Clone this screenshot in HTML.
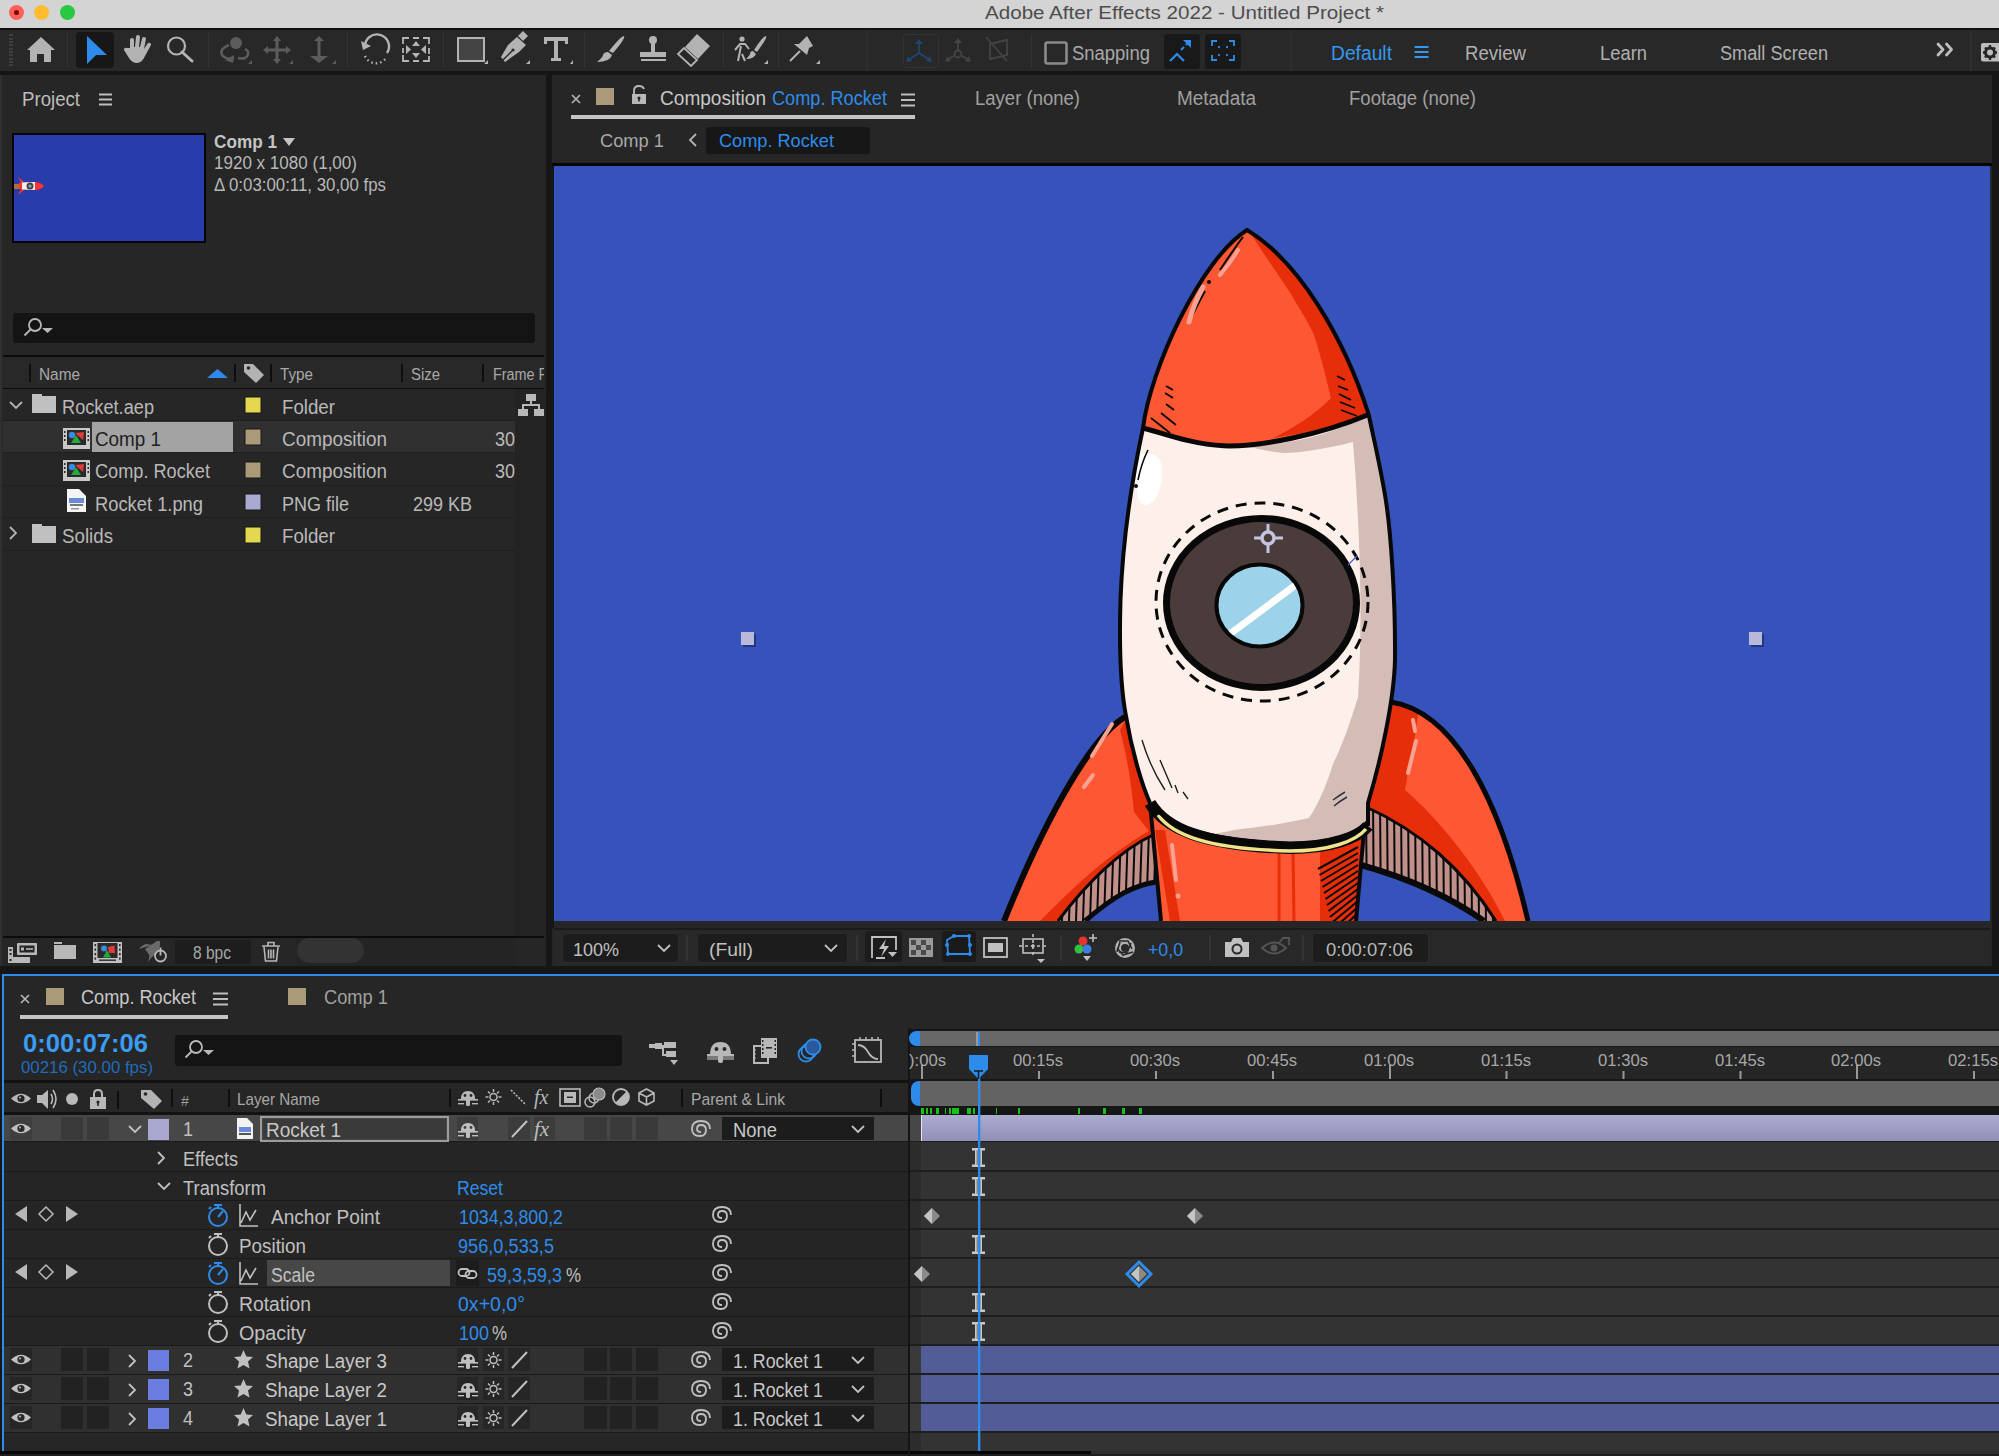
<!DOCTYPE html>
<html><head><meta charset="utf-8">
<style>
*{margin:0;padding:0;box-sizing:border-box}
html,body{width:1999px;height:1456px;overflow:hidden;background:#161616;font-family:"Liberation Sans",sans-serif;color:#b4b4b4}
.a{position:absolute}
.t{position:absolute;white-space:nowrap;line-height:1}
</style></head><body>
<!-- title bar -->
<div class="a" style="left:0;top:0;width:1999px;height:28px;background:#d4d4d4"></div>
<div class="a" style="left:9px;top:5px;width:15px;height:15px;border-radius:50%;background:#fe5f57"></div>
<div class="a" style="left:14px;top:10px;width:5px;height:5px;border-radius:50%;background:#7e0508"></div>
<div class="a" style="left:34px;top:5px;width:15px;height:15px;border-radius:50%;background:#febc2e"></div>
<div class="a" style="left:60px;top:5px;width:15px;height:15px;border-radius:50%;background:#28c840"></div>
<div class="t" style="left: 985px; top: 3px; font-size: 19px; color: rgb(77, 77, 77); transform: scaleX(1.0835); transform-origin: 0px 0px;">Adobe After Effects 2022 - Untitled Project *</div>
<div class="a" style="left:0;top:28px;width:1999px;height:2px;background:#101010"></div>
<!-- toolbar -->
<div class="a" style="left:0;top:30px;width:1999px;height:41px;background:#282828"></div>
<div class="a" style="left:0;top:71px;width:1999px;height:4px;background:#161616"></div>
<svg class="a" style="left:0;top:28px" width="1999" height="44" viewBox="0 28 1999 44">
 <g fill="#3e3e3e"><rect x="9" y="34" width="4" height="2"></rect><rect x="9" y="38" width="4" height="2"></rect><rect x="9" y="41" width="4" height="2"></rect><rect x="9" y="44" width="4" height="2"></rect><rect x="9" y="48" width="4" height="2"></rect><rect x="9" y="51" width="4" height="2"></rect><rect x="9" y="54" width="4" height="2"></rect><rect x="9" y="58" width="4" height="2"></rect><rect x="9" y="61" width="4" height="2"></rect><rect x="9" y="64" width="4" height="2"></rect></g>
 <!-- home -->
 <path fill="#b3b3b3" d="M41 37 L27 50 L30 50 L30 62 L37 62 L37 54 L44 54 L44 62 L51 62 L51 50 L55 50 Z"></path>
 <rect x="67" y="32" width="1" height="36" fill="#333"></rect>
 <rect x="76" y="32" width="38" height="36" rx="4" fill="#171717"></rect>
 <path fill="#2d8ceb" d="M87 36 L87 64 L96 55 L107 55 Z"></path>
 <!-- hand -->
 <path fill="#b3b3b3" d="M130 48 L130 40 a2 2 0 0 1 4 0 L134 47 L135 47 L136 37 a2 2 0 0 1 4 0 L139 47 L140 47 L142 39 a2 2 0 0 1 4 0 L144 49 L148 43 a2 2 0 0 1 3 2 L145 56 Q142 63 137 63 Q132 63 129 58 L124 50 a2 2 0 0 1 3 -2 Z"></path>
 <!-- zoom -->
 <circle cx="176.5" cy="46" r="8.5" fill="none" stroke="#b3b3b3" stroke-width="2.2"></circle>
 <path d="M182 52 L192 61" stroke="#b3b3b3" stroke-width="3" stroke-linecap="round"></path>
 <rect x="208" y="32" width="1" height="36" fill="#333"></rect>
 <!-- orbit -->
 <circle cx="236" cy="43" r="6" fill="#5c5c5c"></circle>
 <path d="M229 45 Q219 49 222 55 Q226 60 234 58 M238 58 Q247 60 248 54 Q249 51 245 49" fill="none" stroke="#5c5c5c" stroke-width="2.5"></path>
 <path d="M225 60 L234 55 L233 63 Z" fill="#5c5c5c"></path>
 <path d="M248 64 L252 60 L252 64 Z" fill="#5c5c5c"></path>
 <!-- move -->
 <path d="M277 36 L281 41 L278.5 41 L278.5 48.5 L286 48.5 L286 46 L291 50 L286 54 L286 51.5 L278.5 51.5 L278.5 59 L281 59 L277 64 L273 59 L275.5 59 L275.5 51.5 L268 51.5 L268 54 L263 50 L268 46 L268 48.5 L275.5 48.5 L275.5 41 L273 41 Z" fill="#5c5c5c"></path>
 <path d="M289 64 L293 60 L293 64 Z" fill="#5c5c5c"></path>
 <!-- dolly -->
 <path d="M319 36 L324 41 L320.5 41 L320.5 56 L328 56 L319 63 L310 56 L317.5 56 L317.5 41 L314 41 Z" fill="#5c5c5c"></path>
 <path d="M332 64 L336 60 L336 64 Z" fill="#5c5c5c"></path>
 <rect x="347" y="32" width="1" height="36" fill="#333"></rect>
 <!-- rotate -->
 <path d="M365 47 A12 12 0 1 1 387 53" fill="none" stroke="#b3b3b3" stroke-width="2.4"></path>
 <path d="M361 41 L363 50 L371 46 Z" fill="#b3b3b3"></path>
 <path d="M365 56 A12 12 0 0 0 386 58" fill="none" stroke="#b3b3b3" stroke-width="2.4" stroke-dasharray="1.5 3"></path>
 <!-- anchor tool -->
 <path d="M403 44 L403 38 L409 38 M413 38 L419 38 M423 38 L429 38 L429 44 M429 48 L429 54 M429 56 L429 61 L423 61 M419 61 L413 61 M409 61 L403 61 L403 55 M403 53 L403 48" fill="none" stroke="#b3b3b3" stroke-width="1.8"></path>
 <path d="M416 41 L420 46 L412 46 Z M416 58 L420 53 L412 53 Z M406 45 L411 49.5 L406 54 Z M426 45 L421 49.5 L426 54 Z" fill="#b3b3b3"></path>
 <rect x="443" y="32" width="1" height="36" fill="#333"></rect>
 <!-- rect -->
 <rect x="458" y="38" width="26" height="23" fill="#444" stroke="#b3b3b3" stroke-width="2"></rect>
 <path d="M484 64 L488 60 L488 64 Z" fill="#b3b3b3"></path>
 <!-- pen -->
 <path d="M505 62 L501 57 L508 45 L517 37 L526 45 L519 52 Z" fill="#b3b3b3"></path>
 <path d="M518 36 L523 31 L528 36 L523 41 Z" fill="#b3b3b3"></path>
 <path d="M503 60 L512 51" stroke="#282828" stroke-width="1.5"></path>
 <circle cx="513" cy="50" r="1.6" fill="#282828"></circle>
 <path d="M526 64 L530 60 L530 64 Z" fill="#b3b3b3"></path>
 <!-- T -->
 <path d="M544 37 L568 37 L568 44 L565 44 L565 41 L558 41 L558 58 L561 58 L561 61 L551 61 L551 58 L554 58 L554 41 L547 41 L547 44 L544 44 Z" fill="#b3b3b3"></path>
 <path d="M570 64 L573 60 L573 64 Z" fill="#b3b3b3"></path>
 <rect x="584" y="32" width="1" height="36" fill="#333"></rect>
 <!-- brush -->
 <path d="M624 36 Q626 38 613 53 L609 51 Q621 36 624 36 Z" fill="#b3b3b3"></path>
 <path d="M608 52 L612 55 Q610 62 597 62 Q603 57 603 55 Q604 52 608 52 Z" fill="#b3b3b3"></path>
 <!-- stamp -->
 <circle cx="653" cy="40" r="4" fill="#b3b3b3"></circle>
 <path d="M651 43 L655 43 L655 52 L666 52 L666 57 L640 57 L640 52 L651 52 Z" fill="#b3b3b3"></path>
 <rect x="641" y="59" width="25" height="2" fill="#b3b3b3"></rect>
 <!-- eraser -->
 <path d="M697 34 L710 46 L698 59 L685 47 Z" fill="#b3b3b3"></path>
 <path d="M684 48 L697 60 L691 66 L678 54 Z" fill="none" stroke="#b3b3b3" stroke-width="1.8"></path>
 <rect x="723" y="32" width="1" height="36" fill="#333"></rect>
 <!-- roto -->
 <circle cx="742" cy="39" r="2.6" fill="#b3b3b3"></circle>
 <path d="M735 50 L740 44 L745 44 L749 49 M741 46 L738 61 M742 54 L745 61" fill="none" stroke="#b3b3b3" stroke-width="2"></path>
 <path d="M766 36 Q768 37 757 52 L754 50 Q763 36 766 36 Z" fill="#b3b3b3"></path>
 <path d="M753 51 L756 54 Q754 59 746 59 Q750 55 750 54 Q750 51 753 51 Z" fill="#b3b3b3"></path>
 <path d="M764 64 L768 60 L768 64 Z" fill="#b3b3b3"></path>
 <rect x="778" y="32" width="1" height="36" fill="#333"></rect>
 <!-- pin -->
 <path d="M799 44 L807 36 L813 46 L809 48 L807 55 L794 44 Z" fill="#b3b3b3"></path>
 <path d="M800 51 L790 61" stroke="#b3b3b3" stroke-width="2"></path>
 <path d="M816 64 L820 60 L820 64 Z" fill="#b3b3b3"></path>
 <rect x="866" y="31" width="2" height="40" fill="#2e2e2e"></rect>
 <!-- 3d axes -->
 <rect x="903.5" y="34.5" width="35" height="33" rx="3" fill="none" stroke="#333"></rect>
 <path d="M919 41 L919 53 L908 60 M919 53 L930 60" fill="none" stroke="#1e4670" stroke-width="1.8"></path>
 <path d="M919 39 L915 44 L923 44 Z M906 62 L908 56 L912 61 Z M932 62 L930 56 L926 61 Z" fill="#1e4670"></path>
 <path d="M958 41 L958 50 M954 56 L947 60 M962 56 L969 60" fill="none" stroke="#444" stroke-width="1.8"></path>
 <circle cx="958" cy="54" r="3.5" fill="none" stroke="#444" stroke-width="1.8"></circle>
 <path d="M958 38 L954 43 L962 43 Z M945 62 L947 56 L951 61 Z M971 62 L969 56 L965 61 Z" fill="#444"></path>
 <path d="M990 44 L1007 40 L1007 55 L990 59 Z M986 37 L1007 61" fill="none" stroke="#444" stroke-width="1.8"></path>
 <rect x="1031" y="34" width="1" height="34" fill="#333"></rect>
 <rect x="1045.5" y="42.5" width="21" height="21" rx="2" fill="none" stroke="#8a8a8a" stroke-width="2.6"></rect>
 <rect x="1164" y="34" width="36" height="35" rx="3" fill="#191919"></rect>
 <path d="M1170 61 L1177 54 L1184 61" fill="none" stroke="#2d8ceb" stroke-width="2.2"></path>
 <path d="M1181 50 L1184 47 M1186 45 L1188 43" stroke="#2d8ceb" stroke-width="2"></path>
 <path d="M1191 40 L1191 48 L1183 40 Z" fill="#2d8ceb"></path>
 <rect x="1205" y="34" width="36" height="35" rx="3" fill="#191919"></rect>
 <path d="M1212 46 L1212 41 L1217 41 M1229 41 L1234 41 L1234 46 M1234 55 L1234 60 L1229 60 M1217 60 L1212 60 L1212 55" fill="none" stroke="#2d8ceb" stroke-width="1.8"></path>
 <path d="M1219 46 L1219 48 M1227 46 L1227 48 M1219 54 L1219 56 M1227 54 L1227 56" stroke="#2d8ceb" stroke-width="1.8"></path>
 <rect x="1290" y="31" width="2" height="40" fill="#2e2e2e"></rect>
 <path d="M1414.5 47 L1428.5 47 M1414.5 52 L1428.5 52 M1414.5 57 L1428.5 57" stroke="#3398ee" stroke-width="2"></path>
 <path d="M1938 44 L1943 49.5 L1938 55 M1946.5 44 L1951.5 49.5 L1946.5 55" fill="none" stroke="#bdbdbd" stroke-width="2.8" stroke-linecap="round" stroke-linejoin="round"></path>
 <rect x="1970" y="31" width="2" height="40" fill="#303030"></rect>
 <rect x="1981" y="43" width="20" height="18.5" rx="2" fill="#bdbdbd"></rect>
 <circle cx="1990" cy="52.5" r="4.5" fill="none" stroke="#262626" stroke-width="3"></circle>
 <path d="M1990 45 L1990 47.5 M1990 57.5 L1990 60 M1983 52.5 L1985.5 52.5 M1994.5 52.5 L1997 52.5 M1985 47.5 L1986.8 49.3 M1993.2 55.7 L1995 57.5 M1995 47.5 L1993.2 49.3 M1986.8 55.7 L1985 57.5" stroke="#262626" stroke-width="2.4"></path>
</svg>
<div class="t" style="left: 1072px; top: 43px; font-size: 20px; color: rgb(168, 168, 168); transform: scaleX(0.9227); transform-origin: 0px 0px;">Snapping</div>
<div class="t" style="left: 1331px; top: 43px; font-size: 20px; color: rgb(51, 152, 238); transform: scaleX(0.9625); transform-origin: 0px 0px;">Default</div>
<div class="t" style="left: 1465px; top: 43px; font-size: 20px; color: rgb(176, 176, 176); transform: scaleX(0.9302); transform-origin: 0px 0px;">Review</div>
<div class="t" style="left: 1600px; top: 43px; font-size: 20px; color: rgb(176, 176, 176); transform: scaleX(0.9188); transform-origin: 0px 0px;">Learn</div>
<div class="t" style="left: 1720px; top: 43px; font-size: 20px; color: rgb(176, 176, 176); transform: scaleX(0.908); transform-origin: 0px 0px;">Small Screen</div>

<!-- project panel -->
<div class="a" style="left:0;top:75px;width:2px;height:891px;background:#303030"></div>
<div class="a" style="left:2px;top:75px;width:544px;height:891px;background:#262626"></div>
<div class="t" style="left: 22px; top: 89px; font-size: 20px; color: rgb(189, 189, 189); transform: scaleX(0.9317); transform-origin: 0px 0px;">Project</div>
<svg class="a" style="left:98px;top:92px" width="16" height="15"><path d="M1 2.5H14M1 7.5H14M1 12.5H14" stroke="#bdbdbd" stroke-width="2"></path></svg>
<div class="a" style="left:12px;top:133px;width:194px;height:110px;background:#283cab;border:2px solid #050505"></div>
<svg class="a" style="left:14px;top:176px" width="32" height="22">
 <path d="M0 8 L6 8 L6 13 L0 13 Z" fill="#b07030"></path>
 <path d="M4 1 L10 6 L8 9 Z M4 19 L10 14 L8 11 Z" fill="#f03a20"></path>
 <path d="M5 7 L22 6 Q28 7 30 10 Q28 13 22 14 L5 13 Z" fill="#f33"></path>
 <path d="M8 6.5 L21 6 L21 14 L8 13.5 Z" fill="#fbeee8"></path>
 <circle cx="16" cy="10" r="3.5" fill="#444"></circle><circle cx="16" cy="10" r="1.6" fill="#7ab"></circle>
</svg>
<div class="t" style="left: 214px; top: 132px; font-size: 19px; color: rgb(196, 196, 196); font-weight: bold; transform: scaleX(0.904); transform-origin: 0px 0px;">Comp 1</div>
<svg class="a" style="left:283px;top:137px" width="13" height="10"><path d="M0 1 L12 1 L6 9 Z" fill="#c4c4c4"></path></svg>
<div class="t" style="left: 214px; top: 154px; font-size: 18px; color: rgb(184, 184, 184); transform: scaleX(0.9462); transform-origin: 0px 0px;">1920 x 1080 (1,00)</div>
<div class="t" style="left: 214px; top: 176px; font-size: 18px; color: rgb(184, 184, 184); transform: scaleX(0.9356); transform-origin: 0px 0px;">Δ 0:03:00:11, 30,00 fps</div>
<!-- search -->
<div class="a" style="left:13px;top:313px;width:522px;height:30px;background:#141414;border-radius:3px"></div>
<svg class="a" style="left:22px;top:316px" width="34" height="24"><circle cx="13" cy="9" r="6" fill="none" stroke="#b8b8b8" stroke-width="1.8"></circle><path d="M9 13 L2.5 19.5" stroke="#b8b8b8" stroke-width="1.8"></path><path d="M20 12 L31 12 L25.5 17 Z" fill="#b8b8b8"></path></svg>
<!-- header -->
<div class="a" style="left:3px;top:355px;width:541px;height:2px;background:#0b0b0b"></div>
<div class="a" style="left:3px;top:357px;width:541px;height:31px;background:#282828"></div>
<div class="a" style="left:3px;top:388px;width:541px;height:1px;background:#0b0b0b"></div>
<svg class="a" style="left:0;top:357px" width="546" height="32">
 <g fill="#0e0e0e"><rect x="29" y="7" width="2" height="18"></rect><rect x="234" y="7" width="2" height="18"></rect><rect x="270" y="7" width="2" height="18"></rect><rect x="401" y="7" width="2" height="18"></rect><rect x="482" y="7" width="2" height="18"></rect></g>
 <path d="M207 21 L228 21 L217.5 12 Z" fill="#2d8ceb"></path>
 <path d="M244 7 L253 7 L264 18 L256 26 L244 15 Z" fill="#b3b3b3"></path><circle cx="248.5" cy="11" r="1.8" fill="#282828"></circle>
</svg>
<div class="t" style="left: 39px; top: 367px; font-size: 16px; color: rgb(168, 168, 168); transform: scaleX(0.9605); transform-origin: 0px 0px;">Name</div>
<div class="t" style="left: 280px; top: 367px; font-size: 16px; color: rgb(168, 168, 168); transform: scaleX(0.9514); transform-origin: 0px 0px;">Type</div>
<div class="t" style="left: 411px; top: 367px; font-size: 16px; color: rgb(168, 168, 168); transform: scaleX(0.9317); transform-origin: 0px 0px;">Size</div>
<div class="a" style="left:493px;top:357px;width:52px;height:31px;overflow:hidden"><div class="t" style="left: 0px; top: 10px; font-size: 16px; color: rgb(168, 168, 168); transform: scaleX(0.8998); transform-origin: 0px 0px;">Frame R</div></div>
<div class="a" style="left:544px;top:357px;width:2px;height:31px;background:#262626"></div>
<!-- rows -->
<div class="a" style="left:3px;top:389px;width:512px;height:548px;background:#262626"></div>
<div class="a" style="left:515px;top:389px;width:30px;height:548px;background:#232323"></div>
<div class="a" style="left:3px;top:421px;width:512px;height:32px;background:#303030"></div>
<div class="a" style="left:3px;top:420px;width:512px;height:1px;background:#1f1f1f"></div>
<div class="a" style="left:3px;top:452px;width:512px;height:1px;background:#1f1f1f"></div>
<div class="a" style="left:3px;top:485px;width:512px;height:1px;background:#1f1f1f"></div>
<div class="a" style="left:3px;top:517px;width:512px;height:1px;background:#1f1f1f"></div>
<div class="a" style="left:3px;top:550px;width:512px;height:1px;background:#1f1f1f"></div>
<div class="a" style="left:92px;top:422px;width:141px;height:30px;background:#a3a3a3"></div>
<svg class="a" style="left:0;top:389px" width="546" height="165">
 <path d="M10 13 L16 19 L22 13" fill="none" stroke="#b3b3b3" stroke-width="1.8"></path>
 <path d="M10 138 L16 144 L10 150" fill="none" stroke="#b3b3b3" stroke-width="1.8"></path>
 <path d="M32 5 L42 5 L42 7 L56 7 L56 24 L32 24 Z" fill="#c0c0c0"></path>
 <path d="M32 135 L42 135 L42 137 L56 137 L56 154 L32 154 Z" fill="#c0c0c0"></path>
 <g id="compic">
 <rect x="63" y="39" width="27" height="21" fill="#c8c8c8"></rect>
 <rect x="67" y="41" width="19" height="15" fill="#2a2a2a"></rect>
 <circle cx="72" cy="46" r="3.2" fill="#3a8ae0"></circle><path d="M75 44 L84 43 L83 51 Z" fill="#e23b3b"></path><path d="M76 46 L81 54 L71 54 Z" fill="#22aa3a"></path>
 <g fill="#2a2a2a"><rect x="64" y="42" width="1.5" height="2"></rect><rect x="64" y="46" width="1.5" height="2"></rect><rect x="64" y="50" width="1.5" height="2"></rect><rect x="87.5" y="42" width="1.5" height="2"></rect><rect x="87.5" y="46" width="1.5" height="2"></rect><rect x="87.5" y="50" width="1.5" height="2"></rect></g>
 </g>
 <use href="#compic" y="32"></use>
 <path d="M67 100 L79 100 L86 107 L86 123 L67 123 Z" fill="#f4f4f4"></path>
 <rect x="69" y="109" width="15" height="5" fill="#6a8ad8"></rect><rect x="70" y="115" width="13" height="2" fill="#777"></rect><rect x="71" y="119" width="8" height="1.5" fill="#999"></rect>
 <g><rect x="245" y="8" width="16" height="16" fill="#e4d84e" stroke="#181818" stroke-width="1"></rect>
 <rect x="245" y="40" width="16" height="16" fill="#ab9a7a" stroke="#181818" stroke-width="1"></rect>
 <rect x="245" y="73" width="16" height="16" fill="#ab9a7a" stroke="#181818" stroke-width="1"></rect>
 <rect x="245" y="105" width="16" height="16" fill="#a9a9d2" stroke="#181818" stroke-width="1"></rect>
 <rect x="245" y="138" width="16" height="16" fill="#e4d84e" stroke="#181818" stroke-width="1"></rect></g>
 <g fill="#b8b8b8"><rect x="526" y="5" width="10" height="7"></rect><rect x="530" y="12" width="2" height="4"></rect><rect x="522" y="15" width="18" height="2"></rect><rect x="522" y="15" width="2" height="5"></rect><rect x="538" y="15" width="2" height="5"></rect><rect x="518" y="20" width="10" height="7"></rect><rect x="534" y="20" width="10" height="7"></rect></g>
</svg>
<div class="t" style="left: 62px; top: 397px; font-size: 20px; color: rgb(185, 185, 185); transform: scaleX(0.9093); transform-origin: 0px 0px;">Rocket.aep</div>
<div class="t" style="left: 95px; top: 429px; font-size: 20px; color: rgb(30, 30, 30); transform: scaleX(0.9424); transform-origin: 0px 0px;">Comp 1</div>
<div class="t" style="left: 95px; top: 461px; font-size: 20px; color: rgb(185, 185, 185); transform: scaleX(0.9075); transform-origin: 0px 0px;">Comp. Rocket</div>
<div class="t" style="left: 95px; top: 494px; font-size: 20px; color: rgb(185, 185, 185); transform: scaleX(0.9163); transform-origin: 0px 0px;">Rocket 1.png</div>
<div class="t" style="left: 62px; top: 526px; font-size: 20px; color: rgb(185, 185, 185); transform: scaleX(0.936); transform-origin: 0px 0px;">Solids</div>
<div class="t" style="left: 282px; top: 397px; font-size: 20px; color: rgb(185, 185, 185); transform: scaleX(0.9347); transform-origin: 0px 0px;">Folder</div>
<div class="t" style="left: 282px; top: 429px; font-size: 20px; color: rgb(185, 185, 185); transform: scaleX(0.9445); transform-origin: 0px 0px;">Composition</div>
<div class="t" style="left: 282px; top: 461px; font-size: 20px; color: rgb(185, 185, 185); transform: scaleX(0.9445); transform-origin: 0px 0px;">Composition</div>
<div class="t" style="left: 282px; top: 494px; font-size: 20px; color: rgb(185, 185, 185); transform: scaleX(0.8997); transform-origin: 0px 0px;">PNG file</div>
<div class="t" style="left: 282px; top: 526px; font-size: 20px; color: rgb(185, 185, 185); transform: scaleX(0.9347); transform-origin: 0px 0px;">Folder</div>
<div class="t" style="left: 495px; top: 429px; font-size: 20px; color: rgb(185, 185, 185); transform: scaleX(0.8989); transform-origin: 0px 0px;">30</div>
<div class="t" style="left: 495px; top: 461px; font-size: 20px; color: rgb(185, 185, 185); transform: scaleX(0.8989); transform-origin: 0px 0px;">30</div>
<div class="t" style="left: 413px; top: 494px; font-size: 20px; color: rgb(185, 185, 185); transform: scaleX(0.8993); transform-origin: 0px 0px;">299 KB</div>
<!-- footer -->
<div class="a" style="left:3px;top:936px;width:541px;height:2px;background:#0b0b0b"></div>
<div class="a" style="left:3px;top:938px;width:543px;height:28px;background:#262626"></div>
<div class="a" style="left:296px;top:938px;width:219px;height:28px;background:#242424"></div>
<svg class="a" style="left:0;top:936px" width="546" height="30">
 <g fill="#b8b8b8"><rect x="8" y="11" width="5" height="16"></rect><rect x="8" y="21" width="22" height="6"></rect><rect x="17" y="7" width="20" height="12" rx="1"></rect></g>
 <g fill="#262626"><rect x="9.5" y="13" width="2" height="2"></rect><rect x="9.5" y="17" width="2" height="2"></rect><rect x="9.5" y="23" width="2" height="2"></rect><rect x="19.5" y="9.5" width="15" height="7"></rect></g>
 <rect x="21" y="11.5" width="3" height="3" fill="#b8b8b8"></rect><rect x="26" y="12.2" width="7" height="1.6" fill="#b8b8b8"></rect>
 <rect x="54" y="6" width="8" height="2" fill="#b8b8b8"></rect><rect x="54" y="9" width="22" height="14" fill="#b8b8b8"></rect>
 <rect x="93" y="6" width="29" height="21" fill="#c0c0c0"></rect><rect x="97.5" y="7" width="20" height="15" fill="#2a2a2a"></rect>
 <g fill="#2a2a2a"><rect x="94.5" y="8" width="1.6" height="2.2"></rect><rect x="94.5" y="12.5" width="1.6" height="2.2"></rect><rect x="94.5" y="17" width="1.6" height="2.2"></rect><rect x="94.5" y="21.5" width="1.6" height="2.2"></rect><rect x="119" y="8" width="1.6" height="2.2"></rect><rect x="119" y="12.5" width="1.6" height="2.2"></rect><rect x="119" y="17" width="1.6" height="2.2"></rect><rect x="119" y="21.5" width="1.6" height="2.2"></rect><rect x="99" y="23.5" width="17" height="1.4"></rect></g>
 <circle cx="104" cy="12.5" r="3" fill="#3a8ae0"></circle><path d="M108 11 L114.5 9.5 L115 17 L109 17 Z" fill="#e23b3b"></path><path d="M107 14 L111 21.5 L103 21.5 Z" fill="#22aa3a"></path>
 <path d="M139 13 Q143 8 147 8 L152 9 Z" fill="#6a6a6a"></path>
 <path d="M148 26 Q150 20 149 17 L159 6 Q161 8 159 14 L151 22 Z" fill="#6a6a6a"></path>
 <path d="M145 13 L157 5 Q161 4 160 8 L150 20 Z" fill="#6a6a6a"></path>
 <circle cx="160.5" cy="20" r="5.5" fill="none" stroke="#b8b8b8" stroke-width="1.8"></circle><rect x="159.6" y="11.5" width="1.8" height="8" fill="#b8b8b8"></rect>
 <rect x="175" y="4" width="76" height="24" rx="3" fill="#1d1d1d"></rect>
 <path d="M262 10 L280 10 M268 10 L268 6.5 L274 6.5 L274 10 M264 11 L265.5 25 L276.5 25 L278 11 M268.5 13.5 L268.5 22.5 M271 13.5 L271 22.5 M273.5 13.5 L273.5 22.5" fill="none" stroke="#b8b8b8" stroke-width="1.6"></path>
 <rect x="297" y="2" width="67" height="25" rx="12.5" fill="#333"></rect>
</svg>
<div class="t" style="left: 193px; top: 943px; font-size: 19px; color: rgb(168, 168, 168); transform: scaleX(0.8175); transform-origin: 0px 0px;">8 bpc</div>

<!-- comp panel -->
<div class="a" style="left:552px;top:75px;width:1440px;height:891px;background:#262626"></div>
<svg class="a" style="left:552px;top:75px" width="1440" height="90">
 <path d="M20 20 L28 28 M28 20 L20 28" stroke="#b8b8b8" stroke-width="1.6"></path>
 <rect x="44" y="13" width="18" height="17" fill="#ab9a7a"></rect>
 <path d="M82 21 L82 16 Q82 11 87 11 Q91 11 92 14" fill="none" stroke="#b8b8b8" stroke-width="1.8"></path>
 <rect x="80" y="19" width="14" height="10" fill="#b8b8b8"></rect><circle cx="87" cy="23" r="1.6" fill="#262626"></circle><rect x="86.2" y="23" width="1.6" height="3.5" fill="#262626"></rect>
 <path d="M349 19.5H363M349 25H363M349 30.5H363" stroke="#bdbdbd" stroke-width="2"></path>
 <rect x="19" y="40" width="344" height="4" fill="#c4c4c4"></rect>
 <path d="M144 59 L138 65 L144 71" fill="none" stroke="#b3b3b3" stroke-width="1.8"></path>
 <rect x="154" y="52" width="164" height="27" rx="3" fill="#171717"></rect>
</svg>
<div class="a" style="left:552px;top:163px;width:1440px;height:3px;background:#050505"></div>
<div class="a" style="left:552px;top:166px;width:2px;height:762px;background:#161616"></div>
<div class="t" style="left: 660px; top: 88px; font-size: 20px; color: rgb(200, 200, 200); transform: scaleX(0.9535); transform-origin: 0px 0px;">Composition</div>
<div class="t" style="left: 772px; top: 88px; font-size: 20px; color: rgb(45, 140, 235); transform: scaleX(0.9075); transform-origin: 0px 0px;">Comp. Rocket</div>
<div class="t" style="left: 975px; top: 88px; font-size: 20px; color: rgb(160, 160, 160); transform: scaleX(0.9259); transform-origin: 0px 0px;">Layer (none)</div>
<div class="t" style="left: 1177px; top: 88px; font-size: 20px; color: rgb(160, 160, 160); transform: scaleX(0.9473); transform-origin: 0px 0px;">Metadata</div>
<div class="t" style="left: 1349px; top: 88px; font-size: 20px; color: rgb(160, 160, 160); transform: scaleX(0.9286); transform-origin: 0px 0px;">Footage (none)</div>
<div class="t" style="left: 600px; top: 131px; font-size: 19px; color: rgb(168, 168, 168); transform: scaleX(0.962); transform-origin: 0px 0px;">Comp 1</div>
<div class="t" style="left: 719px; top: 131px; font-size: 19px; color: rgb(45, 140, 235); transform: scaleX(0.9553); transform-origin: 0px 0px;">Comp. Rocket</div>
<!-- viewer -->
<div class="a" id="viewer" style="left:554px;top:166px;width:1436px;height:755px;background:#3553bb;overflow:hidden"></div>
<!--ROCKET-->
<svg class="a" style="left:554px;top:166px" width="1436" height="755" viewBox="554 166 1436 755">
<defs>
<clipPath id="bodyclip"><path d="M1143 428 C1134 470 1123 530 1120.5 600 C1119 650 1121 690 1126 716 C1132 752 1142 785 1150 803 C1165 828 1200 845 1290 848 C1330 848 1358 838 1368 826 L1368 803 C1381 760 1394 700 1395 660 C1395.5 600 1391 530 1385 495 C1380 465 1374 440 1368.7 414.5 C1320 435 1260 447 1223.6 445.8 C1190 444 1160 432 1143 428 Z"></path></clipPath>
<clipPath id="noseclip"><path d="M1143 428 C1150 370 1200 260 1247 230 C1300 262 1345 340 1368.7 414.5 C1320 435 1260 447 1223.6 445.8 C1190 444 1160 432 1143 428 Z"></path></clipPath>
<clipPath id="lfinclip"><path d="M1127 716 C1094 733 1048 812 1004 921 L1060 921 C1085 885 1120 850 1153 835 L1150 803 Z"></path></clipPath>
<clipPath id="rfinclip"><path d="M1391 702 C1455 712 1500 800 1528 921 L1496 921 C1470 875 1420 830 1364 806 L1368 803 Z"></path></clipPath>
<clipPath id="lbandclip"><path d="M1058 921 C1085 885 1120 850 1153 835 L1156 882 C1135 885 1115 895 1085 921 Z"></path></clipPath>
<clipPath id="rbandclip"><path d="M1364 806 C1420 831 1462 868 1496 921 L1484 921 C1453 899 1411 879 1361 865 Z"></path></clipPath>
<clipPath id="nozclip"><path d="M1150 803 L1161 921 L1356 921 L1364 831 L1368 826 C1358 838 1330 848 1290 848 C1200 845 1165 828 1150 803 Z"></path></clipPath>
</defs>
<path d="M1127 716 C1094 733 1048 812 1004 921 L1060 921 C1085 885 1120 850 1153 835 L1150 803 Z" fill="#fe5733"></path>
<g clip-path="url(#lfinclip)"><path d="M1040 921 C1080 880 1120 845 1160 825 L1165 840 C1130 855 1095 885 1072 921 Z" fill="#e62e0a"></path><path d="M1128 716 L1150 803 L1156 840 L1134 812 C1132 790 1128 760 1120 730 Z" fill="#e62e0a"></path></g>
<path d="M1127 716 C1094 733 1048 812 1004 921" fill="none" stroke="#080808" stroke-width="6"></path>
<path d="M1118 712 L1098 744" stroke="#f7a393" stroke-width="4" stroke-linecap="round" transform="translate(-6,12)"></path>
<path d="M1093 775 L1084 787" stroke="#f7a393" stroke-width="4" stroke-linecap="round"></path>
<path d="M1058 921 C1085 885 1120 850 1153 835 L1156 882 C1135 885 1115 895 1085 921 Z" fill="#c2908a"></path>
<g clip-path="url(#lbandclip)"><path d="M1062 921 L1065 830 M1069 921 L1072 830 M1076 921 L1079 830 M1083 921 L1086 830 M1090 921 L1093 830 M1097 921 L1100 830 M1104 921 L1107 830 M1111 921 L1114 830 M1118 921 L1121 830 M1125 921 L1128 830 M1132 921 L1135 830 M1139 921 L1142 830 M1146 921 L1149 830 M1153 921 L1156 830" stroke="#0a0a0a" stroke-width="2"></path></g>
<path d="M1058 921 C1085 885 1120 850 1153 835" fill="none" stroke="#0a0a0a" stroke-width="3"></path>
<path d="M1156 882 C1135 885 1115 895 1085 921" fill="none" stroke="#0a0a0a" stroke-width="5"></path>
<path d="M1391 702 C1455 712 1500 800 1528 921 L1496 921 C1470 875 1420 830 1364 806 L1368 803 Z" fill="#fe5733"></path>
<g clip-path="url(#rfinclip)"><path d="M1380 690 L1420 700 C1415 740 1410 760 1405 790 C1440 820 1480 870 1505 921 L1480 921 C1450 875 1410 840 1360 815 Z" fill="#e62e0a"></path></g>
<path d="M1391 702 C1455 712 1500 800 1528 921" fill="none" stroke="#080808" stroke-width="5"></path>
<path d="M1413 720 L1415 731 M1416 741 L1408 773" stroke="#f7a393" stroke-width="4" stroke-linecap="round"></path>
<path d="M1364 806 C1420 831 1462 868 1496 921 L1484 921 C1453 899 1411 879 1361 865 Z" fill="#c2908a"></path>
<g clip-path="url(#rbandclip)"><path d="M1366 800 L1367 925 M1373 800 L1374 925 M1380 800 L1381 925 M1387 800 L1388 925 M1394 800 L1395 925 M1401 800 L1402 925 M1408 800 L1409 925 M1415 800 L1416 925 M1422 800 L1423 925 M1429 800 L1430 925 M1436 800 L1437 925 M1443 800 L1444 925 M1450 800 L1451 925 M1457 800 L1458 925 M1464 800 L1465 925 M1471 800 L1472 925 M1478 800 L1479 925 M1485 800 L1486 925 M1492 800 L1493 925 M1499 800 L1500 925" stroke="#0a0a0a" stroke-width="2"></path></g>
<path d="M1364 806 C1420 831 1462 868 1496 921" fill="none" stroke="#0a0a0a" stroke-width="3"></path>
<path d="M1361 865 C1411 879 1453 899 1484 921" fill="none" stroke="#0a0a0a" stroke-width="6"></path>
<path d="M1161 906 L1185 921 L1161 921 Z" fill="#c2908a"></path><path d="M1161 906 L1185 921" stroke="#0a0a0a" stroke-width="3"></path>
<path d="M1150 803 L1161 921 L1356 921 L1364 831 L1368 826 C1358 838 1330 848 1290 848 C1200 845 1165 828 1150 803 Z" fill="#fe5733"></path>
<g clip-path="url(#nozclip)"><rect x="1320" y="820" width="50" height="110" fill="#e62e0a"></rect><path d="M1165 830 L1180 921 L1170 921 L1155 830 Z" fill="#e62e0a"></path><path d="M1279 850 L1279 921 M1293 850 L1294 921" stroke="#e62e0a" stroke-width="3"></path>
<path d="M1318.0 869 L1358 847 M1319.5 875 L1358 853 M1321.0 881 L1358 859 M1322.5 887 L1358 865 M1324.0 893 L1358 871 M1325.5 899 L1358 877 M1327.0 905 L1358 883 M1328.5 911 L1358 889 M1330.0 917 L1358 895 M1331.5 923 L1358 901 M1333.0 929 L1358 907 M1334.5 935 L1358 913" stroke="#0a0a0a" stroke-width="2"></path>
<path d="M1172 845 L1176 880" stroke="#f7a393" stroke-width="4" stroke-linecap="round"></path><circle cx="1178" cy="896" r="2.5" fill="#f7a393"></circle></g>
<path d="M1150 803 L1161 921 M1364 831 L1356 921" fill="none" stroke="#0a0a0a" stroke-width="4"></path>
<path d="M1143 428 C1134 470 1123 530 1120.5 600 C1119 650 1121 690 1126 716 C1132 752 1142 785 1150 803 C1165 828 1200 845 1290 848 C1330 848 1358 838 1368 826 L1368 803 C1381 760 1394 700 1395 660 C1395.5 600 1391 530 1385 495 C1380 465 1374 440 1368.7 414.5 C1320 435 1260 447 1223.6 445.8 C1190 444 1160 432 1143 428 Z" fill="#fdefea"></path>
<g clip-path="url(#bodyclip)"><path d="M1245 446 C1300 444 1340 432 1370 412 L1400 400 L1400 880 L1200 880 L1200 838 C1215 834 1230 830 1250 828 C1270 826 1290 822 1309 818 C1315 810 1325 790 1333 764 C1340 750 1348 730 1358 697 C1363 620 1360 530 1353 442 C1330 448 1300 453 1283 453 C1270 452 1255 448 1245 446 Z" fill="#d4bdb6"></path><path d="M1138 455 C1150 450 1162 455 1162 470 C1162 490 1155 505 1145 505 C1136 505 1134 480 1138 455 Z" fill="#ffffff"></path><path d="M1148 450 C1143 460 1140 470 1138 480" stroke="#0a0a0a" stroke-width="1.6" fill="none"></path><circle cx="1136" cy="486" r="2" fill="#0a0a0a"></circle><path d="M1142 740 C1148 760 1155 775 1165 790 M1160 760 L1172 788 M1175 785 L1178 793 M1183 792 L1188 799" stroke="#202020" stroke-width="1.4" fill="none"></path><path d="M1345 792 Q1340 795 1333 800 M1347 797 Q1340 801 1334 806" stroke="#303040" stroke-width="1.5" fill="none"></path></g>
<path d="M1143 428 C1134 470 1123 530 1120.5 600 C1119 650 1121 690 1126 716 C1132 752 1142 785 1150 803" fill="none" stroke="#080808" stroke-width="4"></path>
<path d="M1368.7 414.5 C1374 440 1380 465 1385 495 C1391 530 1395.5 600 1395 660 C1394 700 1381 760 1368 803 L1368 826" fill="none" stroke="#080808" stroke-width="4"></path>
<path d="M1150 803 C1165 828 1200 845 1290 848 C1330 848 1358 838 1368 826" fill="none" stroke="#080808" stroke-width="12"></path>
<path d="M1158 815 C1172 834 1205 849 1290 851 C1330 851 1356 841 1366 829" fill="none" stroke="#efe48e" stroke-width="3.5"></path>
<path d="M1150 803 C1165 824 1200 840 1290 843 C1330 843 1358 833 1368 821" fill="none" stroke="#080808" stroke-width="3"></path>
<path d="M1143 428 C1150 370 1200 260 1247 230 C1300 262 1345 340 1368.7 414.5 C1320 435 1260 447 1223.6 445.8 C1190 444 1160 432 1143 428 Z" fill="#fe5733"></path>
<g clip-path="url(#noseclip)"><path d="M1247 228 L1262 251 C1275 270 1285 285 1291 294 C1300 310 1310 325 1314 335 C1322 360 1328 385 1331 398 C1315 415 1290 430 1273 438 L1380 420 L1380 228 Z" fill="#e62e0a"></path><path d="M1243 237 C1236 246 1228 258 1220 270" stroke="#0a0a0a" stroke-width="2" fill="none"></path><path d="M1238 250 C1232 260 1226 268 1220 275" stroke="#f7a393" stroke-width="4" fill="none" stroke-linecap="round"></path><circle cx="1209" cy="282" r="2" fill="#0a0a0a"></circle><path d="M1205 291 C1200 300 1196 308 1192 316" stroke="#0a0a0a" stroke-width="2" fill="none"></path><path d="M1203 287 C1197 298 1192 310 1189 322" stroke="#f7a393" stroke-width="5" fill="none" stroke-linecap="round"></path><path d="M1166 386 L1173 390 M1165 393 L1173 398 M1166 404 L1174 410 M1161 413 L1176 425 M1151 418 L1170 433" stroke="#0a0a0a" stroke-width="1.8"></path><path d="M1337 376 L1345 380 M1338 386 L1348 390 M1339 394 L1351 400 M1340 402 L1355 408 M1341 410 L1357 416" stroke="#0a0a0a" stroke-width="1.8"></path></g>
<path d="M1143 428 C1150 370 1200 260 1247 230 C1300 262 1345 340 1368.7 414.5" fill="none" stroke="#080808" stroke-width="4"></path>
<path d="M1368.7 414.5 C1320 435 1260 447 1223.6 445.8 C1190 444 1160 432 1143 428" fill="none" stroke="#080808" stroke-width="5"></path>
<ellipse cx="1262" cy="602" rx="106" ry="99" fill="none" stroke="#0a0a0a" stroke-width="3" stroke-dasharray="11 8"></ellipse>
<ellipse cx="1261.5" cy="603" rx="95" ry="84.5" fill="#4a3c3a" stroke="#080808" stroke-width="7"></ellipse>
<ellipse cx="1259.5" cy="605.5" rx="43" ry="41" fill="#9cd2ea" stroke="#080808" stroke-width="4"></ellipse>
<clipPath id="winclip"><ellipse cx="1259.5" cy="605.5" rx="41" ry="39"></ellipse></clipPath><path clip-path="url(#winclip)" d="M1215 645 L1305 578" stroke="#ffffff" stroke-width="7"></path>
<g stroke="#c4c4de" fill="none"><circle cx="1268" cy="538" r="6" stroke-width="3.5"></circle><path d="M1268 524 L1268 532 M1268 544 L1268 553 M1254 538 L1262 538 M1274 538 L1283 538" stroke-width="3"></path></g>
<path d="M1348 565 L1357 556" stroke="#4a5ad0" stroke-width="1.2"></path>
<rect x="743" y="634" width="13" height="13" fill="#203070" opacity="0.8"></rect><rect x="741" y="632" width="13" height="13" fill="#b8b8d8"></rect>
<rect x="1751" y="634" width="13" height="13" fill="#203070" opacity="0.8"></rect><rect x="1749" y="632" width="13" height="13" fill="#b8b8d8"></rect>
</svg>
<!--/ROCKET-->
<!-- comp footer -->
<div class="a" style="left:554px;top:928px;width:1436px;height:2px;background:#1b1b1b"></div>
<div class="a" style="left:554px;top:930px;width:1436px;height:36px;background:#282828"></div>
<svg class="a" style="left:552px;top:928px" width="1440" height="40">
 <rect x="10.5" y="5.5" width="116" height="29" rx="4" fill="#1c1c1c" stroke="#2c2c2c"></rect>
 <path d="M106 17 L112 23 L118 17" fill="none" stroke="#c0c0c0" stroke-width="1.8"></path>
 <rect x="134" y="7" width="2" height="26" fill="#333"></rect>
 <rect x="145.5" y="5.5" width="150" height="29" rx="4" fill="#1c1c1c" stroke="#2c2c2c"></rect>
 <path d="M273 17 L279 23 L285 17" fill="none" stroke="#c0c0c0" stroke-width="1.8"></path>
 <rect x="304" y="7" width="2" height="26" fill="#333"></rect>
 <rect x="313" y="3" width="37" height="31" rx="3" fill="#1c1c1c"></rect>
 <path d="M320 30 L320 9 L344 9 L344 22 M324 30 L333 30" fill="none" stroke="#c0c0c0" stroke-width="1.8"></path>
 <path d="M334 11 L327 21 L332 21 L329 29 L337 18 L332 18 Z" fill="#c0c0c0"></path>
 <path d="M336 24 L345 24 L340.5 29 Z" fill="#c0c0c0"></path>
 <rect x="357" y="10" width="24" height="19" fill="#9a9a9a"></rect>
 <g fill="#4a4a4a"><rect x="359" y="12" width="5" height="5"></rect><rect x="369" y="12" width="5" height="5"></rect><rect x="364" y="17" width="5" height="5"></rect><rect x="374" y="17" width="5" height="5"></rect><rect x="359" y="22" width="5" height="5"></rect><rect x="369" y="22" width="5" height="5"></rect></g>
 <rect x="390" y="3" width="34" height="31" rx="3" fill="#1a1a1a"></rect>
 <path d="M395 12 L402 8 L417 8 L418 26 L396 26 Z" fill="none" stroke="#2d8ceb" stroke-width="1.8"></path>
 <g fill="#2d8ceb"><circle cx="402" cy="8" r="2"></circle><circle cx="417" cy="8" r="2"></circle><circle cx="395" cy="17" r="2"></circle><circle cx="418" cy="17" r="2"></circle><circle cx="396" cy="26" r="2"></circle><circle cx="418" cy="26" r="2"></circle></g>
 <rect x="432" y="10" width="23" height="19" fill="none" stroke="#c0c0c0" stroke-width="1.8"></rect>
 <rect x="436" y="15" width="15" height="9" fill="#c0c0c0"></rect>
 <rect x="471" y="11" width="20" height="14" fill="none" stroke="#c0c0c0" stroke-width="1.6"></rect>
 <path d="M481 6 L481 30 M467 18 L495 18" stroke="#c0c0c0" stroke-width="1.6" stroke-dasharray="3 3"></path>
 <path d="M481 16 L481 20 M479 18 L483 18" stroke="#c0c0c0" stroke-width="1.6"></path>
 <path d="M485 31 L493 31 L489 35 Z" fill="#c0c0c0"></path>
 <rect x="508" y="7" width="2" height="26" fill="#333"></rect>
 <circle cx="531" cy="13" r="4.5" fill="#e53333"></circle><circle cx="527" cy="21" r="4.5" fill="#2ec23e"></circle><circle cx="535" cy="21" r="4.5" fill="#3d7ee6"></circle>
 <path d="M541 6 L541 14 M537 10 L545 10" stroke="#c0c0c0" stroke-width="1.6"></path>
 <path d="M531 28 L539 28 L535 33 Z" fill="#c0c0c0"></path>
 <circle cx="573" cy="20" r="10" fill="#b0b0b0"></circle>
 <g stroke="#282828" stroke-width="1.6" fill="none"><path d="M567 13 L576 13 L580 21"></path><path d="M579 15 L575 25 L567 24"></path><path d="M581 24 L571 27 L565 20"></path><path d="M565 24 L568 14"></path></g>
 <circle cx="573" cy="20" r="4" fill="#282828"></circle>
 <rect x="657" y="7" width="2" height="26" fill="#333"></rect>
 <path d="M673 14 L679 14 L681 10 L689 10 L691 14 L697 14 L697 29 L673 29 Z" fill="#c0c0c0"></path>
 <circle cx="685" cy="21" r="4.5" fill="none" stroke="#282828" stroke-width="2"></circle>
 <path d="M710 20 Q722 9 734 20 Q722 31 710 20 Z" fill="none" stroke="#555" stroke-width="1.8"></path>
 <circle cx="722" cy="20" r="3.5" fill="#555"></circle>
 <path d="M727 15 L731 10 L737 10 L737 17" fill="none" stroke="#555" stroke-width="1.8"></path>
 <rect x="750" y="7" width="2" height="26" fill="#333"></rect>
 <rect x="760.5" y="5.5" width="116" height="29" rx="4" fill="#1c1c1c" stroke="#2c2c2c"></rect>
</svg>
<div class="t" style="left: 573px; top: 940px; font-size: 19px; color: rgb(192, 192, 192); transform: scaleX(0.9463); transform-origin: 0px 0px;">100%</div>
<div class="t" style="left: 709px; top: 940px; font-size: 19px; color: rgb(192, 192, 192); transform: scaleX(1.0166); transform-origin: 0px 0px;">(Full)</div>
<div class="t" style="left: 1148px; top: 940px; font-size: 19px; color: rgb(45, 140, 235); transform: scaleX(0.9329); transform-origin: 0px 0px;">+0,0</div>
<div class="t" style="left: 1326px; top: 940px; font-size: 19px; color: rgb(184, 184, 184); transform: scaleX(0.9687); transform-origin: 0px 0px;">0:00:07:06</div>

<!-- timeline -->
<div class="a" style="left:0;top:966px;width:1999px;height:8px;background:#161616"></div>
<div class="a" style="left:0;top:974px;width:2px;height:482px;background:#161616"></div>
<div class="a" style="left:2px;top:974px;width:1997px;height:482px;background:#262626;border-top:2px solid #2d8ceb;border-left:2px solid #2d8ceb"></div>
<svg class="a" style="left:0;top:976px" width="400" height="50">
 <path d="M21 19 L29 27 M29 19 L21 27" stroke="#b8b8b8" stroke-width="1.6"></path>
 <rect x="46" y="12" width="18" height="17" fill="#ab9a7a"></rect>
 <path d="M213 17.5H228M213 23H228M213 28.5H228" stroke="#bdbdbd" stroke-width="2"></path>
 <rect x="20" y="39" width="208" height="4" fill="#c4c4c4"></rect>
 <rect x="288" y="12" width="18" height="17" fill="#ab9a7a"></rect>
</svg>
<div class="t" style="left: 81px; top: 987px; font-size: 20px; color: rgb(200, 200, 200); transform: scaleX(0.9075); transform-origin: 0px 0px;">Comp. Rocket</div>
<div class="t" style="left: 324px; top: 987px; font-size: 20px; color: rgb(160, 160, 160); transform: scaleX(0.9139); transform-origin: 0px 0px;">Comp 1</div>
<div class="t" style="left: 23px; top: 1031px; font-size: 25px; font-weight: bold; color: rgb(58, 156, 242); transform: scaleX(1.022); transform-origin: 0px 0px;">0:00:07:06</div>
<div class="t" style="left: 21px; top: 1059px; font-size: 17px; color: rgb(31, 108, 188); transform: scaleX(0.9905); transform-origin: 0px 0px;">00216 (30.00 fps)</div>
<div class="a" style="left:175px;top:1035px;width:447px;height:31px;background:#141414;border-radius:3px"></div>
<svg class="a" style="left:183px;top:1038px" width="34" height="24"><circle cx="13" cy="9" r="6" fill="none" stroke="#b8b8b8" stroke-width="1.8"></circle><path d="M9 13 L2.5 19.5" stroke="#b8b8b8" stroke-width="1.8"></path><path d="M20 12 L31 12 L25.5 17 Z" fill="#b8b8b8"></path></svg>
<svg class="a" style="left:640px;top:1030px" width="260" height="40">
 <g fill="#b8b8b8"><rect x="9" y="14" width="6" height="4"></rect><rect x="14" y="15" width="4" height="2"></rect><rect x="15" y="13" width="7" height="6"></rect><rect x="22" y="15" width="6" height="2"></rect><rect x="24" y="12" width="12" height="6"></rect><rect x="22" y="16" width="2" height="10"></rect><rect x="22" y="24" width="4" height="2"></rect><rect x="26" y="21" width="10" height="6"></rect></g>
 <path d="M30 30 L38 30 L34 35 Z" fill="#b8b8b8"></path>
 <path d="M67 25 L67 30 L94 30 L94 25 Z" fill="#7a7a7a"></path>
 <path d="M70 25 Q70 12 80.5 12 Q91 12 91 25 Z" fill="#b8b8b8"></path>
 <rect x="67" y="24" width="27" height="2" fill="#b8b8b8"></rect>
 <rect x="78" y="23" width="5" height="10" rx="2" fill="#b8b8b8"></rect>
 <circle cx="76.5" cy="19" r="2" fill="#282828"></circle><circle cx="84.5" cy="19" r="2" fill="#282828"></circle>
 <rect x="113" y="15" width="16" height="19" fill="#b8b8b8"></rect><rect x="115" y="17" width="12" height="15" fill="#282828"></rect>
 <rect x="121" y="8" width="16" height="20" fill="#b8b8b8"></rect>
 <g fill="#282828"><rect x="122" y="10" width="1.5" height="2"></rect><rect x="122" y="14" width="1.5" height="2"></rect><rect x="122" y="18" width="1.5" height="2"></rect><rect x="122" y="22" width="1.5" height="2"></rect><rect x="134.5" y="10" width="1.5" height="2"></rect><rect x="134.5" y="14" width="1.5" height="2"></rect><rect x="134.5" y="18" width="1.5" height="2"></rect><rect x="134.5" y="22" width="1.5" height="2"></rect><rect x="126" y="17" width="6" height="1.6"></rect></g>
 <g fill="#b8b8b8"><rect x="114" y="19" width="1.5" height="2"></rect><rect x="114" y="23" width="1.5" height="2"></rect><rect x="114" y="27" width="1.5" height="2"></rect></g>
 <circle cx="166" cy="24" r="7.5" fill="none" stroke="#2d8ceb" stroke-width="1.8"></circle>
 <circle cx="169" cy="21" r="7.5" fill="none" stroke="#2d8ceb" stroke-width="1.8"></circle>
 <circle cx="173" cy="17" r="7.5" fill="#2a5a9a" stroke="#2d8ceb" stroke-width="1.8"></circle>
 <rect x="215" y="10" width="26" height="22" fill="none" stroke="#b8b8b8" stroke-width="1.8"></rect>
 <path d="M218 15 Q224 15 228 22 Q232 29 238 29" fill="none" stroke="#b8b8b8" stroke-width="1.8"></path>
 <path d="M220 7 L220 10 M226 7 L226 10 M232 7 L232 10 M238 7 L238 10 M212 14 L215 14 M212 20 L215 20 M212 26 L215 26" stroke="#b8b8b8" stroke-width="1.5"></path>
</svg>
<div class="a" style="left:4px;top:1080px;width:905px;height:3px;background:#121212"></div>
<div class="a" style="left:4px;top:1112px;width:905px;height:3px;background:#121212"></div>
<svg class="a" style="left:0;top:1083px" width="910" height="30">
 <g transform="translate(0,2)"><path d="M11 13.5 Q21 4 31 13.5 Q21 23 11 13.5 Z" fill="#b8b8b8"></path><circle cx="21" cy="13.5" r="3.6" fill="#262626"></circle><circle cx="20" cy="12.5" r="1" fill="#b8b8b8"></circle>
 <path d="M37 10 L42 10 L48 5 L48 24 L42 18 L37 18 Z" fill="#b8b8b8"></path>
 <path d="M51 9 Q54 14 51 19 M53 5 Q59 14 53 23" fill="none" stroke="#b8b8b8" stroke-width="1.6"></path>
 <circle cx="72" cy="14" r="6" fill="#b8b8b8"></circle>
 <path d="M94 12 L94 9 Q94 5 98 5 Q102 5 102 9 L102 12" fill="none" stroke="#b8b8b8" stroke-width="2"></path>
 <rect x="90" y="12" width="16" height="12" fill="#b8b8b8"></rect><circle cx="98" cy="17" r="1.6" fill="#262626"></circle><rect x="97.2" y="17" width="1.6" height="4" fill="#262626"></rect>
 <rect x="117" y="6" width="2" height="18" fill="#0e0e0e"></rect>
 <path d="M141 5 L151 5 L162 16 L154 24 L141 13 Z" fill="#b3b3b3"></path><circle cx="145.5" cy="9" r="1.8" fill="#262626"></circle></g>
 <rect x="171" y="6" width="2" height="18" fill="#0e0e0e"></rect>
 <rect x="228" y="6" width="2" height="18" fill="#0e0e0e"></rect>
 <rect x="449" y="6" width="2" height="18" fill="#0e0e0e"></rect>
 <g id="shy"><path d="M461 16 Q461 8 468 8 Q475 8 475 16 Z" fill="#b8b8b8"></path><rect x="458" y="16" width="20" height="1.6" fill="#b8b8b8"></rect><rect x="466" y="15" width="4" height="8" rx="1.5" fill="#b8b8b8"></rect><circle cx="465" cy="12.5" r="1.4" fill="#262626"></circle><circle cx="471" cy="12.5" r="1.4" fill="#262626"></circle><rect x="458" y="20" width="6" height="1.4" fill="#b8b8b8"></rect><rect x="472" y="20" width="6" height="1.4" fill="#b8b8b8"></rect></g>
 <circle cx="493.5" cy="14" r="3.5" fill="none" stroke="#b8b8b8" stroke-width="1.5"></circle>
 <path d="M493.5 6 L493.5 9 M493.5 19 L493.5 22 M485.5 14 L488.5 14 M498.5 14 L501.5 14 M488 8.5 L490 10.5 M497 17.5 L499 19.5 M499 8.5 L497 10.5 M490 17.5 L488 19.5" stroke="#b8b8b8" stroke-width="1.5"></path>
 <path d="M511 7 L526 22" stroke="#b8b8b8" stroke-width="1.6" stroke-dasharray="2 1.5"></path>
 <text x="534" y="21" font-family="Liberation Serif" font-style="italic" font-size="20" fill="#b8b8b8">fx</text>
 <rect x="560" y="6" width="20" height="17" fill="none" stroke="#b8b8b8" stroke-width="1.6"></rect><rect x="564" y="9" width="12" height="11" fill="#b8b8b8"></rect><rect x="567" y="13.5" width="6" height="1.5" fill="#262626"></rect>
 <circle cx="590" cy="19" r="5" fill="none" stroke="#b8b8b8" stroke-width="1.5"></circle><circle cx="594" cy="15" r="5" fill="none" stroke="#b8b8b8" stroke-width="1.5"></circle><circle cx="599" cy="11" r="6" fill="#8a8a8a" stroke="#b8b8b8" stroke-width="1.2"></circle>
 <circle cx="621" cy="14" r="8" fill="#262626" stroke="#b8b8b8" stroke-width="1.8"></circle><path d="M626.7 8.3 A8 8 0 0 1 615.3 19.7 Z" fill="#b8b8b8"></path>
 <path d="M646.5 6 L654 10 L654 18 L646.5 22 L639 18 L639 10 Z M639 10 L646.5 14 L654 10 M646.5 14 L646.5 22" fill="none" stroke="#b8b8b8" stroke-width="1.6"></path>
 <rect x="681" y="6" width="2" height="18" fill="#0e0e0e"></rect>
 <rect x="880" y="6" width="2" height="18" fill="#0e0e0e"></rect>
</svg>
<div class="t" style="left: 181px; top: 1093px; font-size: 15px; color: rgb(153, 153, 153); transform: scaleX(0.9588); transform-origin: 0px 0px;">#</div>
<div class="t" style="left: 237px; top: 1091px; font-size: 17px; color: rgb(168, 168, 168); transform: scaleX(0.8962); transform-origin: 0px 0px;">Layer Name</div>
<div class="t" style="left: 691px; top: 1091px; font-size: 17px; color: rgb(168, 168, 168); transform: scaleX(0.921); transform-origin: 0px 0px;">Parent &amp; Link</div>
<div class="a" style="left:4px;top:1115px;width:905px;height:26px;background:#474747"></div>
<div class="a" style="left:4px;top:1141px;width:905px;height:1px;background:#1a1a1a"></div>
<div class="a" style="left:4px;top:1142px;width:905px;height:29px;background:#252525"></div>
<div class="a" style="left:4px;top:1171px;width:905px;height:1px;background:#1a1a1a"></div>
<div class="a" style="left:4px;top:1172px;width:905px;height:28px;background:#252525"></div>
<div class="a" style="left:4px;top:1200px;width:905px;height:1px;background:#1a1a1a"></div>
<div class="a" style="left:4px;top:1201px;width:905px;height:28px;background:#252525"></div>
<div class="a" style="left:4px;top:1229px;width:905px;height:1px;background:#1a1a1a"></div>
<div class="a" style="left:4px;top:1230px;width:905px;height:28px;background:#252525"></div>
<div class="a" style="left:4px;top:1258px;width:905px;height:1px;background:#1a1a1a"></div>
<div class="a" style="left:4px;top:1259px;width:905px;height:28px;background:#252525"></div>
<div class="a" style="left:4px;top:1287px;width:905px;height:1px;background:#1a1a1a"></div>
<div class="a" style="left:4px;top:1288px;width:905px;height:28px;background:#252525"></div>
<div class="a" style="left:4px;top:1316px;width:905px;height:1px;background:#1a1a1a"></div>
<div class="a" style="left:4px;top:1317px;width:905px;height:28px;background:#252525"></div>
<div class="a" style="left:4px;top:1345px;width:905px;height:1px;background:#1a1a1a"></div>
<div class="a" style="left:4px;top:1346px;width:905px;height:28px;background:#303030"></div>
<div class="a" style="left:4px;top:1374px;width:905px;height:1px;background:#1a1a1a"></div>
<div class="a" style="left:4px;top:1375px;width:905px;height:28px;background:#303030"></div>
<div class="a" style="left:4px;top:1403px;width:905px;height:1px;background:#1a1a1a"></div>
<div class="a" style="left:4px;top:1404px;width:905px;height:28px;background:#303030"></div>
<div class="a" style="left:4px;top:1432px;width:905px;height:1px;background:#1a1a1a"></div>
<div class="a" style="left:4px;top:1433px;width:905px;height:18px;background:#262626"></div>
<div class="a" style="left:0px;top:1451px;width:1999px;height:5px;background:#1e1e1e"></div><div class="a" style="left:0px;top:1451px;width:1091px;height:3px;background:#070707"></div><div class="a" style="left:1091px;top:1451px;width:908px;height:3px;background:#2e2e2e"></div>
<svg class="a" style="left:0;top:1115px" width="910" height="28">
 <rect x="10" y="2" width="22" height="23" fill="#3e3e3e"></rect>
 <path d="M11 13.5 Q21 4 31 13.5 Q21 23 11 13.5 Z" fill="#c0c0c0"></path><circle cx="21" cy="13.5" r="3.6" fill="#2a2a2a"></circle><circle cx="20" cy="12.5" r="1" fill="#c0c0c0"></circle>
 <rect x="61" y="2" width="22" height="23" fill="#3a3a3a"></rect><rect x="87" y="2" width="22" height="23" fill="#3a3a3a"></rect>
 <path d="M129 11 L135 17 L141 11" fill="none" stroke="#c0c0c0" stroke-width="1.8"></path>
 <rect x="148" y="4" width="21" height="21" fill="#a8a8d0"></rect>
</svg>
<div class="t" style="left: 183px; top: 1119px; font-size: 20px; color: rgb(192, 192, 192); transform: scaleX(0.8989); transform-origin: 0px 0px;">1</div>
<svg class="a" style="left:0;top:1346px" width="910" height="28">
 <rect x="10" y="2" width="22" height="23" fill="#262626"></rect>
 <path d="M11 13.5 Q21 4 31 13.5 Q21 23 11 13.5 Z" fill="#c0c0c0"></path><circle cx="21" cy="13.5" r="3.6" fill="#2a2a2a"></circle><circle cx="20" cy="12.5" r="1" fill="#c0c0c0"></circle>
 <rect x="61" y="2" width="22" height="23" fill="#222222"></rect><rect x="87" y="2" width="22" height="23" fill="#222222"></rect>
 <path d="M129 9 L135 15 L129 21" fill="none" stroke="#c0c0c0" stroke-width="1.8"></path>
 <rect x="148" y="4" width="21" height="21" fill="#6b7ee0"></rect>
</svg>
<div class="t" style="left: 183px; top: 1350px; font-size: 20px; color: rgb(192, 192, 192); transform: scaleX(0.8989); transform-origin: 0px 0px;">2</div>
<svg class="a" style="left:0;top:1375px" width="910" height="28">
 <rect x="10" y="2" width="22" height="23" fill="#262626"></rect>
 <path d="M11 13.5 Q21 4 31 13.5 Q21 23 11 13.5 Z" fill="#c0c0c0"></path><circle cx="21" cy="13.5" r="3.6" fill="#2a2a2a"></circle><circle cx="20" cy="12.5" r="1" fill="#c0c0c0"></circle>
 <rect x="61" y="2" width="22" height="23" fill="#222222"></rect><rect x="87" y="2" width="22" height="23" fill="#222222"></rect>
 <path d="M129 9 L135 15 L129 21" fill="none" stroke="#c0c0c0" stroke-width="1.8"></path>
 <rect x="148" y="4" width="21" height="21" fill="#6b7ee0"></rect>
</svg>
<div class="t" style="left: 183px; top: 1379px; font-size: 20px; color: rgb(192, 192, 192); transform: scaleX(0.8989); transform-origin: 0px 0px;">3</div>
<svg class="a" style="left:0;top:1404px" width="910" height="28">
 <rect x="10" y="2" width="22" height="23" fill="#262626"></rect>
 <path d="M11 13.5 Q21 4 31 13.5 Q21 23 11 13.5 Z" fill="#c0c0c0"></path><circle cx="21" cy="13.5" r="3.6" fill="#2a2a2a"></circle><circle cx="20" cy="12.5" r="1" fill="#c0c0c0"></circle>
 <rect x="61" y="2" width="22" height="23" fill="#222222"></rect><rect x="87" y="2" width="22" height="23" fill="#222222"></rect>
 <path d="M129 9 L135 15 L129 21" fill="none" stroke="#c0c0c0" stroke-width="1.8"></path>
 <rect x="148" y="4" width="21" height="21" fill="#6b7ee0"></rect>
</svg>
<div class="t" style="left: 183px; top: 1408px; font-size: 20px; color: rgb(192, 192, 192); transform: scaleX(0.8989); transform-origin: 0px 0px;">4</div>
<svg class="a" style="left:230px;top:1115px" width="680" height="28">
 <path d="M7 3 L17 3 L23 9 L23 24 L7 24 Z" fill="#f2f2f2"></path>
 <rect x="9" y="12" width="12" height="5" fill="#6a8ad8"></rect><rect x="9" y="18" width="12" height="2" fill="#555"></rect>
 <rect x="31" y="2" width="187" height="24" fill="none" stroke="#9c9c9c" stroke-width="2"></rect>
 <rect x="33" y="4" width="183" height="20" fill="#3a3a3a"></rect>
 <rect x="227" y="2" width="21" height="23" fill="#3c3c3c"></rect>
 <rect x="278" y="2" width="22" height="23" fill="#3c3c3c"></rect><rect x="304" y="2" width="21" height="23" fill="#3c3c3c"></rect>
 <rect x="354" y="2" width="23" height="23" fill="#3a3a3a"></rect><rect x="380" y="2" width="22" height="23" fill="#3a3a3a"></rect><rect x="406" y="2" width="22" height="23" fill="#3a3a3a"></rect>
 <rect x="492" y="2" width="152" height="23" fill="#1c1c1c"></rect>
 <path d="M622 11 L628 17 L634 11" fill="none" stroke="#c0c0c0" stroke-width="1.8"></path>
</svg>
<div class="t" style="left: 266px; top: 1120px; font-size: 20px; color: rgb(200, 200, 200); transform: scaleX(0.9501); transform-origin: 0px 0px;">Rocket 1</div>
<div class="t" style="left: 733px; top: 1120px; font-size: 20px; color: rgb(200, 200, 200); transform: scaleX(0.9203); transform-origin: 0px 0px;">None</div>
<svg class="a" style="left:450px;top:1346px" width="460" height="28">
 <g transform="translate(-450,1)"><path d="M461 15 Q461 7 468 7 Q475 7 475 15 Z" fill="#c0c0c0"></path><rect x="458" y="15" width="20" height="1.6" fill="#c0c0c0"></rect><rect x="466" y="14" width="4" height="8" rx="1.5" fill="#c0c0c0"></rect><circle cx="465" cy="11.5" r="1.4" fill="#333"></circle><circle cx="471" cy="11.5" r="1.4" fill="#333"></circle><rect x="458" y="19" width="6" height="1.4" fill="#c0c0c0"></rect><rect x="472" y="19" width="6" height="1.4" fill="#c0c0c0"></rect></g>
 <g transform="translate(-450,0)"><rect x="457" y="2" width="21" height="23" fill="#262626"></rect><rect x="483" y="2" width="21" height="23" fill="#262626"></rect><rect x="508" y="2" width="22" height="23" fill="#262626"></rect><path d="M461 16 Q461 8 468 8 Q475 8 475 16 Z" fill="#c0c0c0"></path><rect x="458" y="16" width="20" height="1.6" fill="#c0c0c0"></rect><rect x="466" y="15" width="4" height="8" rx="1.5" fill="#c0c0c0"></rect><circle cx="465" cy="12.5" r="1.4" fill="#262626"></circle><circle cx="471" cy="12.5" r="1.4" fill="#262626"></circle><rect x="458" y="20" width="6" height="1.4" fill="#c0c0c0"></rect><rect x="472" y="20" width="6" height="1.4" fill="#c0c0c0"></rect><circle cx="493.5" cy="14" r="3.5" fill="none" stroke="#c0c0c0" stroke-width="1.5"></circle><path d="M493.5 6 L493.5 9 M493.5 19 L493.5 22 M485.5 14 L488.5 14 M498.5 14 L501.5 14 M488 8.5 L490 10.5 M497 17.5 L499 19.5 M499 8.5 L497 10.5 M490 17.5 L488 19.5" stroke="#c0c0c0" stroke-width="1.5"></path><path d="M512 22 L527 6" stroke="#c0c0c0" stroke-width="2"></path><rect x="584" y="2" width="23" height="23" fill="#222"></rect><rect x="610" y="2" width="22" height="23" fill="#222"></rect><rect x="636" y="2" width="22" height="23" fill="#222"></rect><rect x="722" y="2" width="152" height="23" fill="#1c1c1c"></rect><path d="M852 11 L858 17 L864 11" fill="none" stroke="#c0c0c0" stroke-width="1.8"></path></g>
</svg>
<div class="t" style="left: 733px; top: 1351px; font-size: 20px; color: rgb(200, 200, 200); transform: scaleX(0.8896); transform-origin: 0px 0px;">1. Rocket 1</div>
<svg class="a" style="left:230px;top:1346px" width="30" height="28"><path d="M13.5 4 L16.3 10.5 L23 11 L18 15.5 L19.5 22.5 L13.5 19 L7.5 22.5 L9 15.5 L4 11 L10.7 10.5 Z" fill="#c0c0c0"></path></svg>
<svg class="a" style="left:450px;top:1375px" width="460" height="28">
 <g transform="translate(-450,1)"><path d="M461 15 Q461 7 468 7 Q475 7 475 15 Z" fill="#c0c0c0"></path><rect x="458" y="15" width="20" height="1.6" fill="#c0c0c0"></rect><rect x="466" y="14" width="4" height="8" rx="1.5" fill="#c0c0c0"></rect><circle cx="465" cy="11.5" r="1.4" fill="#333"></circle><circle cx="471" cy="11.5" r="1.4" fill="#333"></circle><rect x="458" y="19" width="6" height="1.4" fill="#c0c0c0"></rect><rect x="472" y="19" width="6" height="1.4" fill="#c0c0c0"></rect></g>
 <g transform="translate(-450,0)"><rect x="457" y="2" width="21" height="23" fill="#262626"></rect><rect x="483" y="2" width="21" height="23" fill="#262626"></rect><rect x="508" y="2" width="22" height="23" fill="#262626"></rect><path d="M461 16 Q461 8 468 8 Q475 8 475 16 Z" fill="#c0c0c0"></path><rect x="458" y="16" width="20" height="1.6" fill="#c0c0c0"></rect><rect x="466" y="15" width="4" height="8" rx="1.5" fill="#c0c0c0"></rect><circle cx="465" cy="12.5" r="1.4" fill="#262626"></circle><circle cx="471" cy="12.5" r="1.4" fill="#262626"></circle><rect x="458" y="20" width="6" height="1.4" fill="#c0c0c0"></rect><rect x="472" y="20" width="6" height="1.4" fill="#c0c0c0"></rect><circle cx="493.5" cy="14" r="3.5" fill="none" stroke="#c0c0c0" stroke-width="1.5"></circle><path d="M493.5 6 L493.5 9 M493.5 19 L493.5 22 M485.5 14 L488.5 14 M498.5 14 L501.5 14 M488 8.5 L490 10.5 M497 17.5 L499 19.5 M499 8.5 L497 10.5 M490 17.5 L488 19.5" stroke="#c0c0c0" stroke-width="1.5"></path><path d="M512 22 L527 6" stroke="#c0c0c0" stroke-width="2"></path><rect x="584" y="2" width="23" height="23" fill="#222"></rect><rect x="610" y="2" width="22" height="23" fill="#222"></rect><rect x="636" y="2" width="22" height="23" fill="#222"></rect><rect x="722" y="2" width="152" height="23" fill="#1c1c1c"></rect><path d="M852 11 L858 17 L864 11" fill="none" stroke="#c0c0c0" stroke-width="1.8"></path></g>
</svg>
<div class="t" style="left: 733px; top: 1380px; font-size: 20px; color: rgb(200, 200, 200); transform: scaleX(0.8896); transform-origin: 0px 0px;">1. Rocket 1</div>
<svg class="a" style="left:230px;top:1375px" width="30" height="28"><path d="M13.5 4 L16.3 10.5 L23 11 L18 15.5 L19.5 22.5 L13.5 19 L7.5 22.5 L9 15.5 L4 11 L10.7 10.5 Z" fill="#c0c0c0"></path></svg>
<svg class="a" style="left:450px;top:1404px" width="460" height="28">
 <g transform="translate(-450,1)"><path d="M461 15 Q461 7 468 7 Q475 7 475 15 Z" fill="#c0c0c0"></path><rect x="458" y="15" width="20" height="1.6" fill="#c0c0c0"></rect><rect x="466" y="14" width="4" height="8" rx="1.5" fill="#c0c0c0"></rect><circle cx="465" cy="11.5" r="1.4" fill="#333"></circle><circle cx="471" cy="11.5" r="1.4" fill="#333"></circle><rect x="458" y="19" width="6" height="1.4" fill="#c0c0c0"></rect><rect x="472" y="19" width="6" height="1.4" fill="#c0c0c0"></rect></g>
 <g transform="translate(-450,0)"><rect x="457" y="2" width="21" height="23" fill="#262626"></rect><rect x="483" y="2" width="21" height="23" fill="#262626"></rect><rect x="508" y="2" width="22" height="23" fill="#262626"></rect><path d="M461 16 Q461 8 468 8 Q475 8 475 16 Z" fill="#c0c0c0"></path><rect x="458" y="16" width="20" height="1.6" fill="#c0c0c0"></rect><rect x="466" y="15" width="4" height="8" rx="1.5" fill="#c0c0c0"></rect><circle cx="465" cy="12.5" r="1.4" fill="#262626"></circle><circle cx="471" cy="12.5" r="1.4" fill="#262626"></circle><rect x="458" y="20" width="6" height="1.4" fill="#c0c0c0"></rect><rect x="472" y="20" width="6" height="1.4" fill="#c0c0c0"></rect><circle cx="493.5" cy="14" r="3.5" fill="none" stroke="#c0c0c0" stroke-width="1.5"></circle><path d="M493.5 6 L493.5 9 M493.5 19 L493.5 22 M485.5 14 L488.5 14 M498.5 14 L501.5 14 M488 8.5 L490 10.5 M497 17.5 L499 19.5 M499 8.5 L497 10.5 M490 17.5 L488 19.5" stroke="#c0c0c0" stroke-width="1.5"></path><path d="M512 22 L527 6" stroke="#c0c0c0" stroke-width="2"></path><rect x="584" y="2" width="23" height="23" fill="#222"></rect><rect x="610" y="2" width="22" height="23" fill="#222"></rect><rect x="636" y="2" width="22" height="23" fill="#222"></rect><rect x="722" y="2" width="152" height="23" fill="#1c1c1c"></rect><path d="M852 11 L858 17 L864 11" fill="none" stroke="#c0c0c0" stroke-width="1.8"></path></g>
</svg>
<div class="t" style="left: 733px; top: 1409px; font-size: 20px; color: rgb(200, 200, 200); transform: scaleX(0.8896); transform-origin: 0px 0px;">1. Rocket 1</div>
<svg class="a" style="left:230px;top:1404px" width="30" height="28"><path d="M13.5 4 L16.3 10.5 L23 11 L18 15.5 L19.5 22.5 L13.5 19 L7.5 22.5 L9 15.5 L4 11 L10.7 10.5 Z" fill="#c0c0c0"></path></svg>
<div class="t" style="left: 265px; top: 1351px; font-size: 20px; color: rgb(200, 200, 200); transform: scaleX(0.9377); transform-origin: 0px 0px;">Shape Layer 3</div>
<div class="t" style="left: 265px; top: 1380px; font-size: 20px; color: rgb(200, 200, 200); transform: scaleX(0.9377); transform-origin: 0px 0px;">Shape Layer 2</div>
<div class="t" style="left: 265px; top: 1409px; font-size: 20px; color: rgb(200, 200, 200); transform: scaleX(0.9377); transform-origin: 0px 0px;">Shape Layer 1</div>
<svg class="a" style="left:450px;top:1115px" width="120" height="28">
 <g transform="translate(-450,0)">
 <path d="M461 16 Q461 8 468 8 Q475 8 475 16 Z" fill="#c0c0c0"></path><rect x="458" y="16" width="20" height="1.6" fill="#c0c0c0"></rect><rect x="466" y="15" width="4" height="8" rx="1.5" fill="#c0c0c0"></rect><circle cx="465" cy="12.5" r="1.4" fill="#3c3c3c"></circle><circle cx="471" cy="12.5" r="1.4" fill="#3c3c3c"></circle><rect x="458" y="20" width="6" height="1.4" fill="#c0c0c0"></rect><rect x="472" y="20" width="6" height="1.4" fill="#c0c0c0"></rect>
 <path d="M512 22 L527 6" stroke="#c0c0c0" stroke-width="2"></path>
 <text x="534" y="21" font-family="Liberation Serif" font-style="italic" font-size="21" fill="#c0c0c0">fx</text>
 </g></svg>
<svg class="a" style="left:688px;top:1115px" width="28" height="28"><path d="M13 17 Q9 17 9 14 Q9 10 13 10 Q18 10 18 15 Q18 21 12 21 Q4 21 4 14 Q4 6 13 6 Q22 6 22 14" fill="none" stroke="#c0c0c0" stroke-width="1.8"></path></svg>
<svg class="a" style="left:688px;top:1346px" width="28" height="28"><path d="M13 17 Q9 17 9 14 Q9 10 13 10 Q18 10 18 15 Q18 21 12 21 Q4 21 4 14 Q4 6 13 6 Q22 6 22 14" fill="none" stroke="#c0c0c0" stroke-width="1.8"></path></svg>
<svg class="a" style="left:688px;top:1375px" width="28" height="28"><path d="M13 17 Q9 17 9 14 Q9 10 13 10 Q18 10 18 15 Q18 21 12 21 Q4 21 4 14 Q4 6 13 6 Q22 6 22 14" fill="none" stroke="#c0c0c0" stroke-width="1.8"></path></svg>
<svg class="a" style="left:688px;top:1404px" width="28" height="28"><path d="M13 17 Q9 17 9 14 Q9 10 13 10 Q18 10 18 15 Q18 21 12 21 Q4 21 4 14 Q4 6 13 6 Q22 6 22 14" fill="none" stroke="#c0c0c0" stroke-width="1.8"></path></svg>
<svg class="a" style="left:0;top:1142px" width="910" height="205">
 <path d="M158 10 L164 16 L158 22" fill="none" stroke="#c0c0c0" stroke-width="1.8"></path>
 <path d="M158 41 L164 47 L170 41" fill="none" stroke="#c0c0c0" stroke-width="1.8"></path>
 <g id="kfnav"><path d="M27 64 L15 72 L27 80 Z" fill="#b8b8b8"></path><path d="M46 65 L53 72 L46 79 L39 72 Z" fill="none" stroke="#b8b8b8" stroke-width="1.5"></path><path d="M66 64 L78 72 L66 80 Z" fill="#b8b8b8"></path></g>
 <use href="#kfnav" y="58"></use>
 <g id="swb"><rect x="206" y="61" width="26" height="26" fill="#262626"></rect><circle cx="218" cy="75" r="9" fill="none" stroke="#2d8ceb" stroke-width="2"></circle><path d="M214 63 L222 63 M218 63 L218 66 M218 75 L223 69 M209 67 L211 65" stroke="#2d8ceb" stroke-width="2"></path></g>
 <use href="#swb" y="58"></use>
 <g id="gr"><path d="M240 62 L240 84 L258 84 M241 81 L246 70 L250 78 L256 68" fill="none" stroke="#c0c0c0" stroke-width="1.6"></path></g>
 <use href="#gr" y="58"></use>
 <g id="sw"><circle cx="218" cy="104" r="9" fill="none" stroke="#c0c0c0" stroke-width="2"></circle><path d="M214 92 L222 92 M218 92 L218 95 M209 96 L211 94" stroke="#c0c0c0" stroke-width="2"></path></g>
 <use href="#sw" y="58"></use><use href="#sw" y="87"></use>
 <rect x="267" y="118" width="183" height="26" fill="#474747"></rect>
 <rect x="456" y="118" width="23" height="26" fill="#1c1c1c"></rect>
 <rect x="458.5" y="127" width="11" height="7" rx="3.5" fill="none" stroke="#c0c0c0" stroke-width="1.8"></rect><rect x="465.5" y="129" width="11" height="7" rx="3.5" fill="none" stroke="#c0c0c0" stroke-width="1.8"></rect>
 <g id="spiral" fill="none" stroke="#c0c0c0" stroke-width="1.8"><path d="M722 76 Q718 76 718 73 Q718 69 722 69 Q727 69 727 74 Q727 80 721 80 Q713 80 713 73 Q713 65 722 65 Q731 65 731 73"></path></g>
 <use href="#spiral" y="29"></use><use href="#spiral" y="58"></use><use href="#spiral" y="87"></use><use href="#spiral" y="116"></use>
</svg>
<div class="t" style="left: 183px; top: 1149px; font-size: 20px; color: rgb(192, 192, 192); transform: scaleX(0.9049); transform-origin: 0px 0px;">Effects</div>
<div class="t" style="left: 183px; top: 1178px; font-size: 20px; color: rgb(192, 192, 192); transform: scaleX(0.9182); transform-origin: 0px 0px;">Transform</div>
<div class="t" style="left: 271px; top: 1207px; font-size: 20px; color: rgb(192, 192, 192); transform: scaleX(0.9518); transform-origin: 0px 0px;">Anchor Point</div>
<div class="t" style="left: 239px; top: 1236px; font-size: 20px; color: rgb(192, 192, 192); transform: scaleX(0.9416); transform-origin: 0px 0px;">Position</div>
<div class="t" style="left: 271px; top: 1265px; font-size: 20px; color: rgb(192, 192, 192); transform: scaleX(0.8795); transform-origin: 0px 0px;">Scale</div>
<div class="t" style="left: 239px; top: 1294px; font-size: 20px; color: rgb(192, 192, 192); transform: scaleX(0.9664); transform-origin: 0px 0px;">Rotation</div>
<div class="t" style="left: 239px; top: 1323px; font-size: 20px; color: rgb(192, 192, 192); transform: scaleX(0.988); transform-origin: 0px 0px;">Opacity</div>
<div class="t" style="left: 457px; top: 1178px; font-size: 20px; color: rgb(45, 140, 235); transform: scaleX(0.8804); transform-origin: 0px 0px;">Reset</div>
<div class="t" style="left: 459px; top: 1207px; font-size: 20px; color: rgb(45, 140, 235); transform: scaleX(0.8906); transform-origin: 0px 0px;">1034,3,800,2</div>
<div class="t" style="left: 458px; top: 1236px; font-size: 20px; color: rgb(45, 140, 235); transform: scaleX(0.9086); transform-origin: 0px 0px;">956,0,533,5</div>
<div class="t" style="left: 487px; top: 1265px; font-size: 20px; color: rgb(45, 140, 235); transform: scaleX(0.899); transform-origin: 0px 0px;">59,3,59,3</div>
<div class="t" style="left: 458px; top: 1294px; font-size: 20px; color: rgb(45, 140, 235); transform: scaleX(0.9765); transform-origin: 0px 0px;">0x+0,0°</div>
<div class="t" style="left: 459px; top: 1323px; font-size: 20px; color: rgb(45, 140, 235); transform: scaleX(0.8989); transform-origin: 0px 0px;">100</div>
<div class="t" style="left: 566px; top: 1265px; font-size: 20px; color: rgb(192, 192, 192); transform: scaleX(0.8428); transform-origin: 0px 0px;">%</div>
<div class="t" style="left: 492px; top: 1323px; font-size: 20px; color: rgb(192, 192, 192); transform: scaleX(0.8428); transform-origin: 0px 0px;">%</div>
<div class="a" style="left:908px;top:1028px;width:2px;height:428px;background:#141414"></div>
<div class="a" style="left:910px;top:1029px;width:1089px;height:18px;background:#161616"></div>
<div class="a" style="left:920px;top:1031px;width:1079px;height:15px;background:#686868"></div>
<div class="a" style="left:909px;top:1031px;width:11px;height:15px;background:#2d8ceb;border-radius:8px 0 0 8px"></div>
<div class="a" style="left:976px;top:1032px;width:2px;height:14px;background:#999"></div><div class="a" style="left:978px;top:1032px;width:2px;height:14px;background:#2d8ceb"></div>
<div class="a" style="left:910px;top:1079px;width:1089px;height:36px;background:#161616"></div>
<div class="a" style="left:920px;top:1081px;width:1079px;height:25px;background:#636363"></div>
<div class="a" style="left:911px;top:1081px;width:9px;height:25px;background:#2d8ceb;border-radius:8px 0 0 8px"></div>
<div class="a" style="left:921px;top:1108px;width:3px;height:6px;background:#19c019"></div>
<div class="a" style="left:926px;top:1108px;width:2px;height:6px;background:#19c019"></div>
<div class="a" style="left:930px;top:1108px;width:2px;height:6px;background:#19c019"></div>
<div class="a" style="left:936px;top:1108px;width:3px;height:6px;background:#19c019"></div>
<div class="a" style="left:945px;top:1108px;width:1px;height:6px;background:#19c019"></div>
<div class="a" style="left:949px;top:1108px;width:2px;height:6px;background:#19c019"></div>
<div class="a" style="left:952px;top:1108px;width:7px;height:6px;background:#19c019"></div>
<div class="a" style="left:967px;top:1108px;width:4px;height:6px;background:#19c019"></div>
<div class="a" style="left:973px;top:1108px;width:2px;height:6px;background:#19c019"></div>
<div class="a" style="left:996px;top:1108px;width:1px;height:6px;background:#19c019"></div>
<div class="a" style="left:1018px;top:1108px;width:2px;height:6px;background:#19c019"></div>
<div class="a" style="left:1078px;top:1108px;width:2px;height:6px;background:#19c019"></div>
<div class="a" style="left:1103px;top:1108px;width:3px;height:6px;background:#19c019"></div>
<div class="a" style="left:1122px;top:1108px;width:3px;height:6px;background:#19c019"></div>
<div class="a" style="left:1139px;top:1108px;width:3px;height:6px;background:#19c019"></div>
<div class="a" style="left:910px;top:1115px;width:1089px;height:25px;background:#333333"></div>
<div class="a" style="left:910px;top:1140px;width:1089px;height:2px;background:#1e1e1e"></div>
<div class="a" style="left:910px;top:1115px;width:11px;height:25px;background:#3a3a3a"></div>
<div class="a" style="left:910px;top:1142px;width:1089px;height:28px;background:#333333"></div>
<div class="a" style="left:910px;top:1170px;width:1089px;height:2px;background:#1e1e1e"></div>
<div class="a" style="left:910px;top:1142px;width:11px;height:28px;background:#2c2c2c"></div>
<div class="a" style="left:910px;top:1172px;width:1089px;height:27px;background:#333333"></div>
<div class="a" style="left:910px;top:1199px;width:1089px;height:2px;background:#1e1e1e"></div>
<div class="a" style="left:910px;top:1172px;width:11px;height:27px;background:#2c2c2c"></div>
<div class="a" style="left:910px;top:1201px;width:1089px;height:27px;background:#333333"></div>
<div class="a" style="left:910px;top:1228px;width:1089px;height:2px;background:#1e1e1e"></div>
<div class="a" style="left:910px;top:1201px;width:11px;height:27px;background:#2c2c2c"></div>
<div class="a" style="left:910px;top:1230px;width:1089px;height:27px;background:#333333"></div>
<div class="a" style="left:910px;top:1257px;width:1089px;height:2px;background:#1e1e1e"></div>
<div class="a" style="left:910px;top:1230px;width:11px;height:27px;background:#2c2c2c"></div>
<div class="a" style="left:910px;top:1259px;width:1089px;height:27px;background:#333333"></div>
<div class="a" style="left:910px;top:1286px;width:1089px;height:2px;background:#1e1e1e"></div>
<div class="a" style="left:910px;top:1259px;width:11px;height:27px;background:#2c2c2c"></div>
<div class="a" style="left:910px;top:1288px;width:1089px;height:27px;background:#333333"></div>
<div class="a" style="left:910px;top:1315px;width:1089px;height:2px;background:#1e1e1e"></div>
<div class="a" style="left:910px;top:1288px;width:11px;height:27px;background:#2c2c2c"></div>
<div class="a" style="left:910px;top:1317px;width:1089px;height:27px;background:#333333"></div>
<div class="a" style="left:910px;top:1344px;width:1089px;height:2px;background:#1e1e1e"></div>
<div class="a" style="left:910px;top:1317px;width:11px;height:27px;background:#2c2c2c"></div>
<div class="a" style="left:910px;top:1346px;width:1089px;height:27px;background:#333333"></div>
<div class="a" style="left:910px;top:1373px;width:1089px;height:2px;background:#1e1e1e"></div>
<div class="a" style="left:910px;top:1346px;width:11px;height:27px;background:#3a3a3a"></div>
<div class="a" style="left:910px;top:1375px;width:1089px;height:27px;background:#333333"></div>
<div class="a" style="left:910px;top:1402px;width:1089px;height:2px;background:#1e1e1e"></div>
<div class="a" style="left:910px;top:1375px;width:11px;height:27px;background:#3a3a3a"></div>
<div class="a" style="left:910px;top:1404px;width:1089px;height:27px;background:#333333"></div>
<div class="a" style="left:910px;top:1431px;width:1089px;height:2px;background:#1e1e1e"></div>
<div class="a" style="left:910px;top:1404px;width:11px;height:27px;background:#3a3a3a"></div>
<div class="a" style="left:910px;top:1433px;width:1089px;height:18px;background:#333333"></div><div class="a" style="left:910px;top:1433px;width:11px;height:18px;background:#2c2c2c"></div>
<div class="a" style="left:910px;top:1115px;width:11px;height:26px;background:#474747"></div>
<div class="a" style="left:921px;top:1115px;width:1078px;height:26px;background:linear-gradient(#acacd0,#9090b8);border-left:1px solid #e8e8f4"></div>
<div class="a" style="left:921px;top:1346px;width:1078px;height:27px;background:#525c96"></div>
<div class="a" style="left:921px;top:1375px;width:1078px;height:27px;background:#525c96"></div>
<div class="a" style="left:921px;top:1404px;width:1078px;height:27px;background:#525c96"></div>
<svg class="a" style="left:910px;top:1046px" width="1089" height="34">
<rect x="11" y="19" width="2" height="14" fill="#999"></rect>
<rect x="128" y="25" width="2" height="8" fill="#999"></rect>
<rect x="245" y="25" width="2" height="8" fill="#999"></rect>
<rect x="362" y="25" width="2" height="8" fill="#999"></rect>
<rect x="479" y="19" width="2" height="14" fill="#999"></rect>
<rect x="595.5" y="25" width="2" height="8" fill="#999"></rect>
<rect x="712.5" y="25" width="2" height="8" fill="#999"></rect>
<rect x="829.5" y="25" width="2" height="8" fill="#999"></rect>
<rect x="946" y="19" width="2" height="14" fill="#999"></rect>
<rect x="1063" y="25" width="2" height="8" fill="#999"></rect>
</svg>
<div class="t" style="left: 909px; top: 1052px; font-size: 17px; color: rgb(168, 168, 168); transform: scaleX(0.9789); transform-origin: 0px 0px;">):00s</div>
<div class="t" style="left: 1013px; top: 1052px; font-size: 17px; color: rgb(168, 168, 168); transform: scaleX(0.9795); transform-origin: 0px 0px;">00:15s</div>
<div class="t" style="left: 1130px; top: 1052px; font-size: 17px; color: rgb(168, 168, 168); transform: scaleX(0.9795); transform-origin: 0px 0px;">00:30s</div>
<div class="t" style="left: 1247px; top: 1052px; font-size: 17px; color: rgb(168, 168, 168); transform: scaleX(0.9795); transform-origin: 0px 0px;">00:45s</div>
<div class="t" style="left: 1364px; top: 1052px; font-size: 17px; color: rgb(168, 168, 168); transform: scaleX(0.9795); transform-origin: 0px 0px;">01:00s</div>
<div class="t" style="left: 1480.5px; top: 1052px; font-size: 17px; color: rgb(168, 168, 168); transform: scaleX(0.9795); transform-origin: 0px 0px;">01:15s</div>
<div class="t" style="left: 1597.5px; top: 1052px; font-size: 17px; color: rgb(168, 168, 168); transform: scaleX(0.9795); transform-origin: 0px 0px;">01:30s</div>
<div class="t" style="left: 1714.5px; top: 1052px; font-size: 17px; color: rgb(168, 168, 168); transform: scaleX(0.9795); transform-origin: 0px 0px;">01:45s</div>
<div class="t" style="left: 1831px; top: 1052px; font-size: 17px; color: rgb(168, 168, 168); transform: scaleX(0.9795); transform-origin: 0px 0px;">02:00s</div>
<div class="t" style="left: 1948px; top: 1052px; font-size: 17px; color: rgb(168, 168, 168); transform: scaleX(0.9795); transform-origin: 0px 0px;">02:15s</div>
<svg class="a" style="left:910px;top:1046px" width="1089" height="410">
 <path d="M59 9 L78 9 L78 23 L68.5 33 L59 23 Z" fill="#2d8ceb"></path>
 <rect x="68" y="23" width="2.2" height="382" fill="#2d8ceb"></rect>
 <path d="M64 25 L73 25 M68.5 25 L68.5 33" stroke="#1a1a1a" stroke-width="1.5"></path>
 <g id="ib" fill="#c8c8c8"><rect x="62" y="102" width="13" height="2.5"></rect><rect x="62" y="118.5" width="13" height="2.5"></rect><rect x="65" y="104" width="7" height="15"></rect><rect x="66.5" y="104" width="4" height="15" fill="#888"></rect></g>
 <use href="#ib" y="29"></use><use href="#ib" y="87"></use><use href="#ib" y="145"></use><use href="#ib" y="174"></use>
 <g id="kf"><path d="M22 162 L30 170 L22 178 L14 170 Z" fill="#8a8a8a"></path><path d="M22 162 L22 178 L14 170 Z" fill="#c4c4c4"></path></g>
 <use href="#kf" x="263"></use>
 <use href="#kf" x="-10" y="58"></use>
 <path d="M229 216 L241 228 L229 240 L217 228 Z" fill="none" stroke="#2d8ceb" stroke-width="3"></path>
 <path d="M229 220 L237 228 L229 236 L221 228 Z" fill="#8a8a8a"></path><path d="M229 220 L229 236 L221 228 Z" fill="#c4c4c4"></path>
 <rect x="68" y="33" width="2.2" height="372" fill="#2d8ceb"></rect>
</svg>

</body></html>
